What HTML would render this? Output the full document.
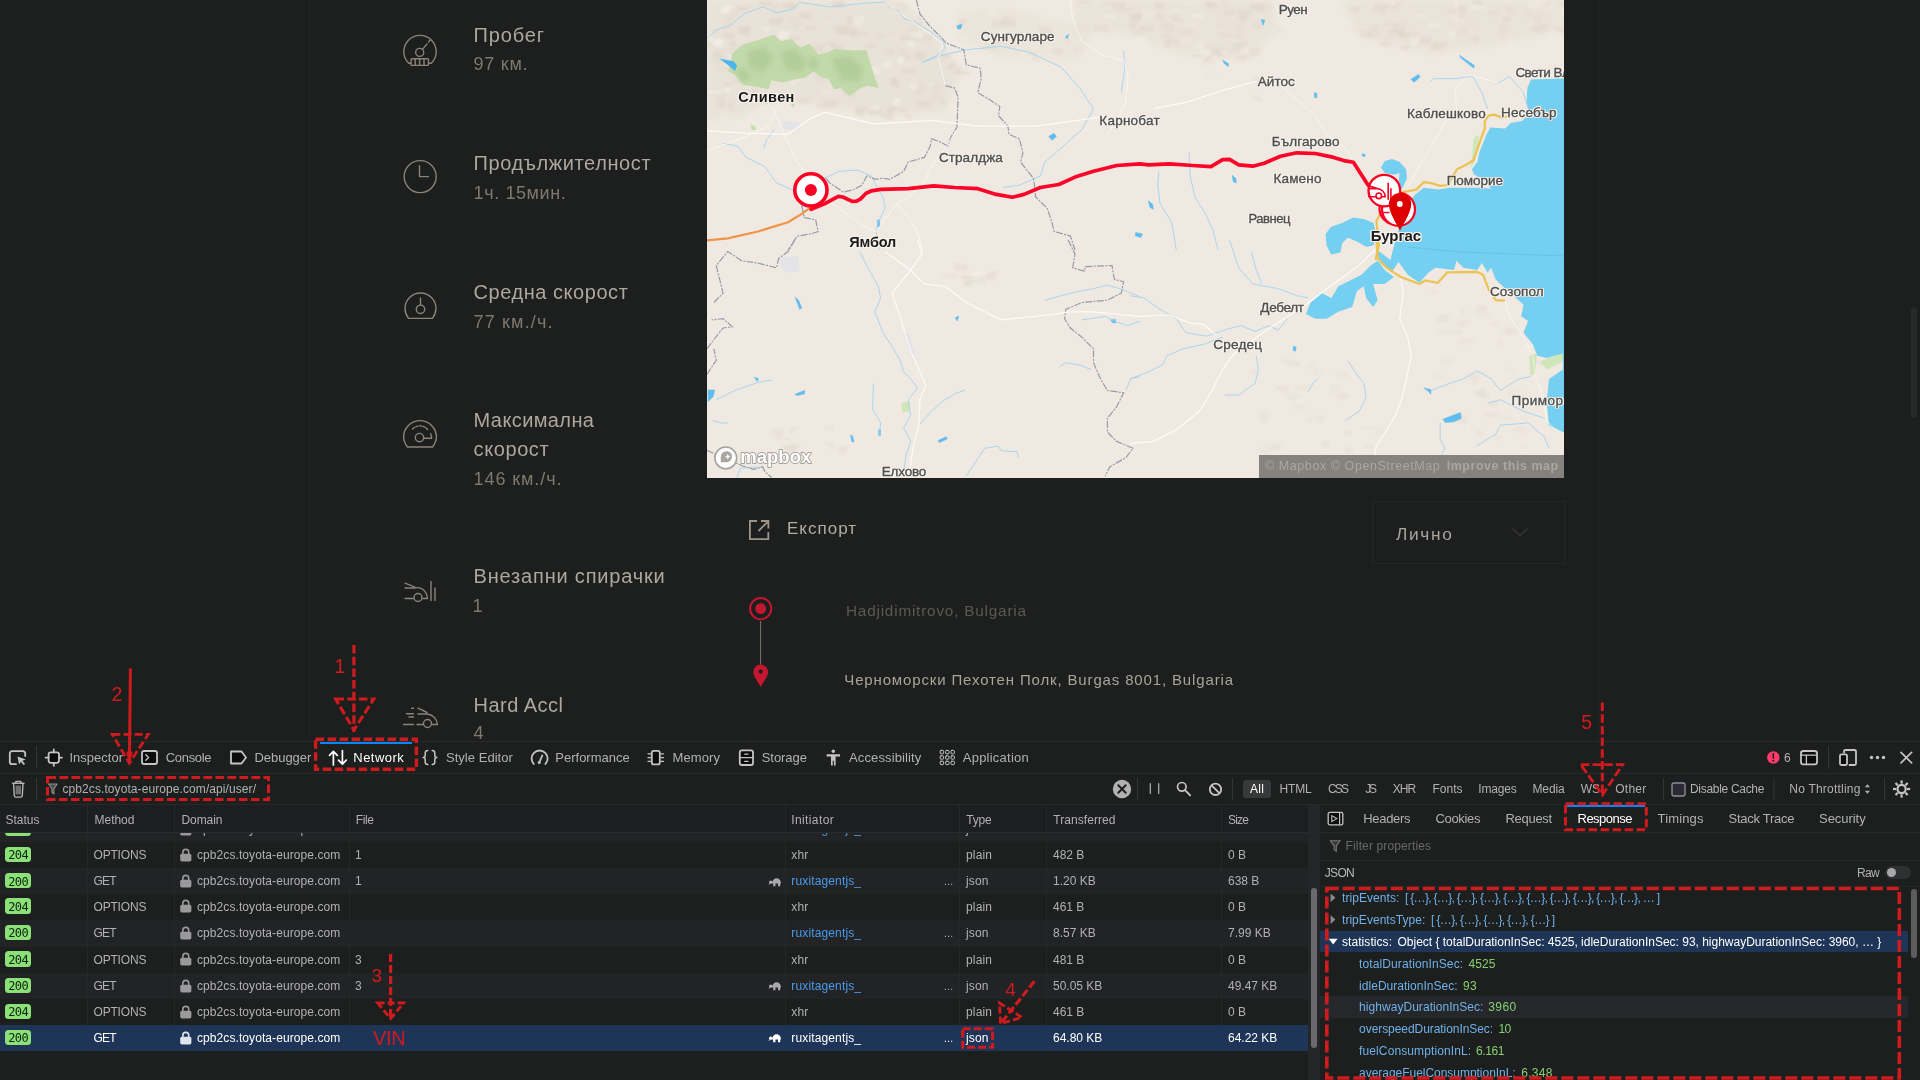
<!DOCTYPE html>
<html lang="bg"><head><meta charset="utf-8"><title>MyT trip</title>
<style>
html,body{margin:0;padding:0;background:#1d1f1e;overflow:hidden}
body{width:1920px;height:1080px;position:relative;font-family:"Liberation Sans",sans-serif}
.b{position:absolute;display:block}
.t{position:absolute;white-space:pre;line-height:1;display:block}
</style></head><body><div class="b" style="left:0;top:0;width:1920px;height:1080px;will-change:transform;overflow:hidden">
<svg class="b" style="left:707px;top:0" width="857" height="478" viewBox="707 0 857 478" font-family='&quot;Liberation Sans&quot;, sans-serif'><defs><filter id="bl" x="-20%" y="-20%" width="140%" height="140%"><feGaussianBlur stdDeviation="2.500"/></filter><filter id="bl2" x="707" y="0" width="857" height="478" filterUnits="userSpaceOnUse"><feGaussianBlur stdDeviation=".9"/></filter><clipPath id="mc"><rect x="707" y="0" width="857" height="478"/></clipPath></defs><g clip-path="url(#mc)"><rect x="707" y="0" width="857" height="478" fill="#efe9e1"/><path d="M707.0 0.0 L900.0 0.0 L930.0 30.0 L962.0 70.0 L945.0 112.0 L880.0 116.0 L820.0 106.0 L770.0 100.0 L740.0 118.0 L707.0 120.0Z" fill="#e3dbcd" opacity="0.44" filter="url(#bl)"/><path d="M955.0 10.0 L1010.0 8.0 L1095.0 30.0 L1080.0 60.0 L1000.0 58.0 L960.0 40.0Z" fill="#e3dbcd" opacity="0.28" filter="url(#bl)"/><path d="M1075.0 0.0 L1270.0 0.0 L1280.0 30.0 L1245.0 60.0 L1180.0 55.0 L1130.0 35.0 L1075.0 32.0Z" fill="#e3dbcd" opacity="0.36" filter="url(#bl)"/><path d="M1340.0 0.0 L1564.0 0.0 L1564.0 30.0 L1500.0 45.0 L1430.0 55.0 L1360.0 38.0Z" fill="#e3dbcd" opacity="0.36" filter="url(#bl)"/><g filter="url(#bl2)"><path d="M789.6 18.1 L801.7 18.2 L799.6 21.5 L789.7 20.8Z" fill="#d9d0c1" opacity="0.21"/><path d="M836.4 4.5 L846.2 3.5 L840.9 7.9 L834.8 7.2Z" fill="#d9d0c1" opacity="0.44"/><path d="M738.6 26.8 L750.5 27.0 L748.7 35.5 L738.9 33.7Z" fill="#d9d0c1" opacity="0.49"/><path d="M718.9 103.0 L727.1 102.1 L722.4 106.9 L717.3 106.1Z" fill="#d9d0c1" opacity="0.44"/><path d="M753.1 69.8 L765.1 69.9 L763.1 75.0 L753.3 74.0Z" fill="#d9d0c1" opacity="0.21"/><path d="M759.5 81.6 L769.2 81.9 L768.0 86.5 L759.9 85.6Z" fill="#d9d0c1" opacity="0.28"/><path d="M909.6 83.9 L917.3 83.9 L915.9 90.3 L909.7 89.0Z" fill="#f7f3ee" opacity="0.41"/><path d="M737.1 50.2 L750.4 50.1 L747.7 54.1 L737.1 53.3Z" fill="#d9d0c1" opacity="0.39"/><path d="M902.0 68.8 L916.6 69.2 L915.2 73.6 L902.7 72.7Z" fill="#d9d0c1" opacity="0.37"/><path d="M823.3 100.8 L838.7 101.2 L837.0 106.6 L824.0 105.5Z" fill="#d9d0c1" opacity="0.40"/><path d="M916.6 34.2 L925.8 33.0 L920.2 41.2 L914.7 39.8Z" fill="#d9d0c1" opacity="0.24"/><path d="M736.9 7.1 L750.3 6.5 L745.6 10.9 L735.8 10.1Z" fill="#d9d0c1" opacity="0.46"/><path d="M727.5 53.9 L738.6 54.7 L738.9 62.2 L728.8 60.5Z" fill="#f7f3ee" opacity="0.28"/><path d="M812.9 43.1 L827.6 42.2 L821.9 51.8 L811.5 50.0Z" fill="#d9d0c1" opacity="0.26"/><path d="M766.5 58.2 L778.0 57.0 L771.7 62.8 L764.5 61.9Z" fill="#d9d0c1" opacity="0.30"/><path d="M883.1 61.9 L894.9 60.8 L888.9 68.9 L881.3 67.5Z" fill="#f7f3ee" opacity="0.43"/><path d="M930.0 95.7 L939.3 94.8 L934.3 101.1 L928.4 100.1Z" fill="#d9d0c1" opacity="0.21"/><path d="M724.2 25.1 L731.0 24.0 L726.0 30.1 L722.4 29.1Z" fill="#d9d0c1" opacity="0.24"/><path d="M732.9 43.6 L738.2 43.9 L738.0 51.9 L733.3 50.2Z" fill="#d9d0c1" opacity="0.27"/><path d="M795.6 43.7 L801.9 44.9 L804.6 51.8 L797.6 50.2Z" fill="#d9d0c1" opacity="0.34"/><path d="M728.9 12.3 L737.7 13.1 L738.5 16.9 L730.2 15.9Z" fill="#d9d0c1" opacity="0.20"/><path d="M949.5 63.4 L956.1 62.3 L951.0 69.6 L947.6 68.4Z" fill="#d9d0c1" opacity="0.49"/><path d="M927.1 83.5 L935.0 82.7 L930.8 88.7 L925.8 87.7Z" fill="#f7f3ee" opacity="0.35"/><path d="M905.7 39.6 L913.1 40.7 L915.5 47.4 L907.6 45.9Z" fill="#f7f3ee" opacity="0.44"/><path d="M915.7 88.8 L923.2 88.4 L920.5 94.9 L915.1 93.7Z" fill="#d9d0c1" opacity="0.20"/><path d="M778.3 31.1 L790.9 31.0 L787.9 39.8 L778.0 38.1Z" fill="#f7f3ee" opacity="0.49"/><path d="M763.2 27.2 L770.4 27.5 L769.9 31.4 L763.7 30.6Z" fill="#f7f3ee" opacity="0.45"/><path d="M829.3 78.4 L843.1 78.7 L841.6 81.9 L829.9 81.2Z" fill="#f7f3ee" opacity="0.43"/><path d="M898.3 57.4 L905.2 57.0 L902.5 65.1 L897.6 63.6Z" fill="#f7f3ee" opacity="0.49"/><path d="M807.9 48.2 L823.4 47.4 L817.6 55.5 L806.6 54.0Z" fill="#d9d0c1" opacity="0.24"/><path d="M937.7 96.8 L944.3 97.9 L946.9 104.7 L939.7 103.1Z" fill="#d9d0c1" opacity="0.30"/><path d="M846.9 15.7 L852.1 16.1 L852.2 24.5 L847.5 22.8Z" fill="#d9d0c1" opacity="0.47"/><path d="M817.6 104.6 L831.7 104.0 L826.9 108.9 L816.6 108.0Z" fill="#d9d0c1" opacity="0.27"/><path d="M856.5 31.1 L866.2 32.1 L867.5 34.9 L858.2 34.2Z" fill="#d9d0c1" opacity="0.33"/><path d="M855.8 108.5 L865.4 108.5 L863.5 117.0 L855.8 115.3Z" fill="#d9d0c1" opacity="0.35"/><path d="M711.8 52.8 L718.8 53.5 L719.8 55.8 L713.0 55.2Z" fill="#d9d0c1" opacity="0.34"/><path d="M891.9 66.8 L900.5 66.9 L899.2 72.9 L892.1 71.7Z" fill="#f7f3ee" opacity="0.22"/><path d="M849.9 29.8 L857.9 29.8 L856.4 37.5 L849.9 35.9Z" fill="#d9d0c1" opacity="0.42"/><path d="M939.7 53.2 L951.4 53.2 L949.2 59.2 L939.7 58.0Z" fill="#d9d0c1" opacity="0.33"/><path d="M843.0 57.4 L858.3 58.3 L858.3 64.6 L844.5 63.1Z" fill="#f7f3ee" opacity="0.27"/><path d="M738.0 53.1 L743.8 52.0 L739.2 57.5 L736.3 56.6Z" fill="#d9d0c1" opacity="0.43"/><path d="M889.6 79.2 L896.2 80.4 L898.6 87.5 L891.5 85.9Z" fill="#d9d0c1" opacity="0.48"/><path d="M808.6 58.5 L824.4 57.7 L818.6 66.5 L807.2 64.9Z" fill="#d9d0c1" opacity="0.35"/><path d="M793.5 23.5 L802.0 22.3 L796.4 30.8 L791.6 29.4Z" fill="#d9d0c1" opacity="0.33"/><path d="M711.6 39.8 L723.5 38.7 L717.6 45.9 L709.9 44.6Z" fill="#f7f3ee" opacity="0.43"/><path d="M774.7 4.8 L788.3 3.9 L782.6 9.4 L773.2 8.4Z" fill="#d9d0c1" opacity="0.47"/><path d="M915.8 31.0 L922.5 31.2 L921.7 39.5 L916.1 37.8Z" fill="#f7f3ee" opacity="0.22"/><path d="M721.7 82.6 L731.3 83.6 L732.9 86.0 L723.4 85.3Z" fill="#d9d0c1" opacity="0.43"/><path d="M728.4 102.7 L734.1 102.6 L732.6 110.9 L728.2 109.3Z" fill="#d9d0c1" opacity="0.36"/><path d="M740.0 63.2 L747.6 62.4 L743.3 66.9 L738.6 66.2Z" fill="#d9d0c1" opacity="0.25"/><path d="M786.6 36.6 L799.9 36.6 L797.2 41.3 L786.6 40.4Z" fill="#d9d0c1" opacity="0.30"/><path d="M711.6 30.1 L716.8 30.2 L716.2 37.5 L711.8 36.0Z" fill="#d9d0c1" opacity="0.34"/><path d="M915.8 51.9 L926.3 51.6 L923.3 59.9 L915.4 58.3Z" fill="#d9d0c1" opacity="0.40"/><path d="M919.2 84.8 L931.2 84.4 L927.6 90.2 L918.6 89.1Z" fill="#d9d0c1" opacity="0.23"/><path d="M725.0 88.9 L732.8 87.9 L728.0 92.9 L723.4 92.1Z" fill="#f7f3ee" opacity="0.46"/><path d="M878.0 33.8 L885.7 33.7 L883.8 38.6 L877.8 37.6Z" fill="#d9d0c1" opacity="0.33"/><path d="M955.0 65.6 L962.7 65.2 L959.6 74.4 L954.3 72.7Z" fill="#d9d0c1" opacity="0.19"/><path d="M804.3 57.0 L814.8 57.0 L812.8 61.2 L804.3 60.3Z" fill="#d9d0c1" opacity="0.27"/><path d="M729.9 47.9 L735.3 47.5 L732.7 51.1 L729.1 50.4Z" fill="#d9d0c1" opacity="0.37"/><path d="M841.9 90.1 L854.2 91.0 L854.8 97.4 L843.5 95.9Z" fill="#d9d0c1" opacity="0.29"/><path d="M891.7 77.2 L897.1 78.1 L899.2 85.2 L893.2 83.6Z" fill="#d9d0c1" opacity="0.41"/><path d="M914.1 16.7 L924.9 17.5 L925.4 22.7 L915.5 21.5Z" fill="#f7f3ee" opacity="0.44"/><path d="M855.9 107.1 L868.4 106.5 L863.8 114.3 L854.9 112.9Z" fill="#d9d0c1" opacity="0.23"/><path d="M799.0 12.6 L813.2 12.9 L811.4 18.9 L799.5 17.7Z" fill="#d9d0c1" opacity="0.40"/><path d="M831.8 0.4 L845.5 0.4 L842.8 7.9 L831.8 6.4Z" fill="#d9d0c1" opacity="0.39"/><path d="M723.8 88.4 L731.6 87.9 L728.2 91.9 L722.9 91.2Z" fill="#f7f3ee" opacity="0.25"/><path d="M833.0 45.9 L843.2 46.5 L843.3 53.0 L834.0 51.6Z" fill="#d9d0c1" opacity="0.39"/><path d="M726.8 17.7 L734.5 17.2 L731.4 25.2 L726.0 23.7Z" fill="#d9d0c1" opacity="0.20"/><path d="M722.5 32.3 L734.9 32.7 L733.8 39.4 L723.2 38.0Z" fill="#d9d0c1" opacity="0.35"/><path d="M825.5 56.0 L831.8 55.2 L828.1 64.3 L824.3 62.7Z" fill="#f7f3ee" opacity="0.48"/><path d="M711.5 55.1 L725.5 55.0 L722.3 63.9 L711.3 62.1Z" fill="#d9d0c1" opacity="0.26"/><path d="M855.3 17.0 L866.0 16.1 L860.9 25.7 L853.8 24.0Z" fill="#f7f3ee" opacity="0.35"/><path d="M933.1 84.4 L940.7 84.4 L939.1 92.8 L933.1 91.1Z" fill="#d9d0c1" opacity="0.19"/><path d="M832.4 54.1 L840.7 53.7 L837.8 57.9 L831.8 57.2Z" fill="#d9d0c1" opacity="0.45"/><path d="M707.4 90.1 L721.7 91.1 L722.2 93.8 L709.1 93.1Z" fill="#f7f3ee" opacity="0.47"/><path d="M780.9 44.7 L790.2 44.9 L789.1 53.7 L781.3 51.9Z" fill="#d9d0c1" opacity="0.32"/><path d="M777.2 5.8 L783.3 5.3 L780.3 13.8 L776.3 12.2Z" fill="#f7f3ee" opacity="0.27"/><path d="M774.8 61.3 L781.8 62.4 L784.1 66.6 L776.6 65.5Z" fill="#f7f3ee" opacity="0.44"/><path d="M867.9 109.6 L883.2 110.1 L881.9 115.9 L868.8 114.6Z" fill="#d9d0c1" opacity="0.41"/><path d="M822.0 90.3 L834.1 89.2 L828.0 95.0 L820.2 94.1Z" fill="#f7f3ee" opacity="0.23"/><path d="M827.4 41.2 L835.7 42.4 L837.8 48.7 L829.3 47.2Z" fill="#d9d0c1" opacity="0.39"/><path d="M783.7 66.9 L793.1 66.1 L788.5 70.9 L782.4 70.1Z" fill="#d9d0c1" opacity="0.47"/><path d="M833.8 26.4 L848.7 26.3 L845.3 35.4 L833.6 33.6Z" fill="#d9d0c1" opacity="0.25"/><path d="M730.1 41.0 L736.1 40.5 L733.0 45.5 L729.2 44.6Z" fill="#d9d0c1" opacity="0.46"/><path d="M898.2 49.5 L907.7 49.2 L904.8 55.7 L897.7 54.4Z" fill="#d9d0c1" opacity="0.21"/><path d="M739.1 60.4 L751.0 59.7 L746.4 68.6 L738.0 66.9Z" fill="#d9d0c1" opacity="0.27"/><path d="M808.9 53.5 L824.4 54.4 L824.3 61.6 L810.4 60.0Z" fill="#d9d0c1" opacity="0.20"/><path d="M887.9 107.5 L898.1 106.3 L892.1 114.0 L885.9 112.7Z" fill="#d9d0c1" opacity="0.47"/><path d="M917.5 102.7 L933.2 101.7 L927.0 107.1 L916.0 106.2Z" fill="#d9d0c1" opacity="0.35"/><path d="M880.9 113.0 L893.9 113.6 L893.4 119.9 L882.0 118.5Z" fill="#d9d0c1" opacity="0.36"/><path d="M717.1 93.9 L724.6 94.2 L724.3 102.4 L717.7 100.7Z" fill="#d9d0c1" opacity="0.23"/><path d="M771.2 76.4 L783.9 75.3 L777.9 80.0 L769.5 79.3Z" fill="#d9d0c1" opacity="0.37"/><path d="M806.0 26.8 L817.6 26.4 L813.7 29.9 L805.2 29.3Z" fill="#d9d0c1" opacity="0.48"/><path d="M871.4 106.1 L881.6 105.4 L877.5 110.5 L870.4 109.6Z" fill="#f7f3ee" opacity="0.41"/><path d="M785.4 2.6 L795.9 2.4 L793.1 9.7 L785.1 8.3Z" fill="#d9d0c1" opacity="0.39"/><path d="M715.7 40.6 L725.3 39.8 L721.0 47.7 L714.5 46.2Z" fill="#f7f3ee" opacity="0.42"/><path d="M835.7 24.6 L851.4 25.4 L850.8 29.5 L837.0 28.5Z" fill="#d9d0c1" opacity="0.26"/><path d="M900.9 35.4 L916.4 34.6 L910.8 41.4 L899.7 40.2Z" fill="#d9d0c1" opacity="0.32"/><path d="M876.7 113.9 L883.3 113.2 L879.6 119.2 L875.5 118.1Z" fill="#f7f3ee" opacity="0.24"/><path d="M720.2 7.2 L729.5 8.1 L730.7 15.6 L721.8 13.9Z" fill="#f7f3ee" opacity="0.49"/><path d="M897.3 3.8 L909.6 3.5 L906.1 9.1 L896.8 8.0Z" fill="#d9d0c1" opacity="0.24"/><path d="M707.7 33.6 L716.6 32.7 L711.8 42.3 L706.2 40.6Z" fill="#f7f3ee" opacity="0.26"/><path d="M797.9 98.6 L812.0 97.5 L805.6 104.2 L796.1 103.1Z" fill="#d9d0c1" opacity="0.31"/><path d="M714.7 49.3 L728.7 48.2 L722.2 56.9 L712.9 55.4Z" fill="#d9d0c1" opacity="0.21"/><path d="M897.6 107.8 L906.3 108.9 L908.2 112.5 L899.4 111.5Z" fill="#d9d0c1" opacity="0.27"/><path d="M889.7 38.0 L897.8 38.6 L898.2 41.0 L890.8 40.4Z" fill="#f7f3ee" opacity="0.38"/><path d="M766.6 57.0 L782.2 56.8 L778.1 65.7 L766.2 64.0Z" fill="#d9d0c1" opacity="0.32"/><path d="M753.6 96.3 L766.8 97.0 L766.3 104.2 L754.7 102.7Z" fill="#d9d0c1" opacity="0.29"/><path d="M788.5 43.4 L802.1 42.7 L796.9 46.9 L787.3 46.2Z" fill="#f7f3ee" opacity="0.27"/><path d="M723.5 4.1 L734.6 5.2 L736.2 9.0 L725.4 8.0Z" fill="#f7f3ee" opacity="0.49"/><path d="M774.5 10.1 L780.6 10.6 L781.1 16.1 L775.4 14.9Z" fill="#d9d0c1" opacity="0.26"/><path d="M813.3 74.4 L825.7 75.3 L826.0 81.9 L814.7 80.4Z" fill="#d9d0c1" opacity="0.23"/><path d="M921.4 35.3 L932.7 35.8 L932.3 40.5 L922.4 39.4Z" fill="#d9d0c1" opacity="0.27"/><path d="M769.6 18.4 L784.3 18.0 L780.0 24.9 L768.9 23.6Z" fill="#d9d0c1" opacity="0.49"/><path d="M836.4 27.8 L850.3 28.9 L851.4 34.7 L838.3 33.3Z" fill="#d9d0c1" opacity="0.34"/><path d="M915.9 100.9 L930.9 100.4 L926.3 104.1 L915.0 103.5Z" fill="#d9d0c1" opacity="0.25"/><path d="M955.1 70.0 L970.3 70.9 L970.2 75.2 L956.6 74.2Z" fill="#d9d0c1" opacity="0.27"/><path d="M905.3 113.5 L911.5 113.8 L911.2 120.1 L905.8 118.7Z" fill="#d9d0c1" opacity="0.30"/><path d="M743.0 24.5 L750.9 24.8 L750.5 31.1 L743.7 29.8Z" fill="#d9d0c1" opacity="0.20"/><path d="M790.4 81.4 L797.5 80.7 L793.7 86.3 L789.3 85.3Z" fill="#f7f3ee" opacity="0.36"/><path d="M723.1 12.2 L732.5 12.5 L731.7 18.5 L723.7 17.2Z" fill="#d9d0c1" opacity="0.24"/><path d="M884.3 49.2 L892.4 50.3 L894.4 54.0 L886.1 53.1Z" fill="#d9d0c1" opacity="0.36"/><path d="M798.1 50.0 L812.6 49.6 L808.6 59.0 L797.5 57.2Z" fill="#d9d0c1" opacity="0.41"/><path d="M758.9 0.7 L773.9 1.5 L773.4 6.2 L760.2 5.1Z" fill="#d9d0c1" opacity="0.46"/><path d="M824.5 19.5 L829.7 19.8 L829.8 25.8 L825.1 24.6Z" fill="#f7f3ee" opacity="0.22"/><path d="M865.7 44.5 L876.2 44.0 L872.4 48.4 L864.8 47.6Z" fill="#d9d0c1" opacity="0.47"/><path d="M734.7 58.9 L748.6 58.1 L743.4 67.7 L733.5 65.9Z" fill="#d9d0c1" opacity="0.48"/><path d="M720.6 111.1 L729.9 111.4 L729.0 119.6 L721.1 117.9Z" fill="#f7f3ee" opacity="0.24"/><path d="M907.4 26.6 L916.8 27.4 L917.6 34.7 L908.7 33.1Z" fill="#d9d0c1" opacity="0.26"/><path d="M808.9 62.1 L818.2 61.5 L814.3 65.9 L807.9 65.1Z" fill="#f7f3ee" opacity="0.46"/><path d="M717.5 67.5 L730.8 68.3 L730.9 70.7 L718.8 70.1Z" fill="#d9d0c1" opacity="0.37"/><path d="M847.3 75.2 L855.6 75.4 L854.6 80.8 L847.6 79.7Z" fill="#d9d0c1" opacity="0.39"/><path d="M820.9 52.6 L826.2 52.6 L825.1 59.3 L820.9 58.0Z" fill="#d9d0c1" opacity="0.42"/><path d="M905.9 55.0 L912.9 54.1 L908.3 60.8 L904.3 59.7Z" fill="#d9d0c1" opacity="0.32"/><path d="M730.4 53.0 L741.0 53.4 L740.0 56.3 L730.9 55.6Z" fill="#d9d0c1" opacity="0.41"/><path d="M905.3 61.4 L910.9 61.1 L908.8 67.4 L904.8 66.2Z" fill="#f7f3ee" opacity="0.23"/><path d="M893.7 97.8 L900.8 97.8 L899.3 106.7 L893.6 104.9Z" fill="#f7f3ee" opacity="0.47"/><path d="M749.1 94.6 L764.3 94.2 L760.1 98.0 L748.5 97.3Z" fill="#f7f3ee" opacity="0.24"/><path d="M915.0 17.2 L925.5 16.5 L921.1 25.7 L913.8 24.0Z" fill="#d9d0c1" opacity="0.35"/><path d="M788.4 4.4 L795.4 5.5 L797.5 8.4 L790.1 7.6Z" fill="#d9d0c1" opacity="0.46"/><path d="M750.0 94.2 L756.3 94.5 L756.1 100.4 L750.6 99.1Z" fill="#d9d0c1" opacity="0.46"/><path d="M848.6 69.6 L863.3 70.8 L864.3 73.2 L850.5 72.5Z" fill="#d9d0c1" opacity="0.31"/><path d="M910.4 31.8 L926.3 31.4 L922.0 38.2 L909.8 36.9Z" fill="#f7f3ee" opacity="0.33"/><path d="M752.1 89.2 L757.6 88.6 L754.5 97.2 L751.1 95.6Z" fill="#d9d0c1" opacity="0.49"/><path d="M856.4 79.6 L864.8 78.5 L859.4 82.7 L854.5 82.1Z" fill="#d9d0c1" opacity="0.38"/><path d="M817.2 61.5 L832.1 60.9 L826.9 65.3 L816.1 64.6Z" fill="#d9d0c1" opacity="0.20"/><path d="M707.7 42.6 L713.8 41.9 L710.4 47.7 L706.6 46.7Z" fill="#d9d0c1" opacity="0.37"/><path d="M759.1 74.9 L769.3 75.9 L770.7 78.7 L760.8 77.9Z" fill="#d9d0c1" opacity="0.24"/><path d="M731.4 76.6 L746.0 76.3 L742.3 84.3 L731.0 82.7Z" fill="#d9d0c1" opacity="0.20"/><path d="M871.5 67.5 L880.3 67.3 L878.1 74.4 L871.2 73.0Z" fill="#f7f3ee" opacity="0.41"/><path d="M961.2 35.6 L970.6 34.6 L965.2 40.1 L959.4 39.2Z" fill="#f7f3ee" opacity="0.12"/><path d="M1032.1 56.9 L1038.7 57.2 L1038.2 61.1 L1032.6 60.3Z" fill="#d9d0c1" opacity="0.25"/><path d="M998.3 23.6 L1003.8 24.3 L1005.0 31.9 L999.4 30.3Z" fill="#f7f3ee" opacity="0.12"/><path d="M1073.2 46.7 L1083.3 46.6 L1080.9 54.2 L1073.0 52.7Z" fill="#d9d0c1" opacity="0.14"/><path d="M987.5 10.0 L996.2 10.5 L996.0 17.5 L988.3 16.0Z" fill="#f7f3ee" opacity="0.26"/><path d="M992.2 36.8 L1002.0 36.9 L1000.3 44.5 L992.3 43.0Z" fill="#d9d0c1" opacity="0.25"/><path d="M991.5 20.3 L1004.6 20.9 L1004.0 28.9 L992.4 27.2Z" fill="#d9d0c1" opacity="0.29"/><path d="M1001.0 20.4 L1016.0 20.9 L1014.5 27.2 L1001.8 25.9Z" fill="#d9d0c1" opacity="0.31"/><path d="M1020.7 51.7 L1033.4 51.5 L1030.4 59.8 L1020.5 58.2Z" fill="#f7f3ee" opacity="0.23"/><path d="M998.1 19.0 L1009.9 20.0 L1010.9 22.5 L999.7 21.8Z" fill="#d9d0c1" opacity="0.13"/><path d="M1003.3 15.4 L1008.6 15.8 L1009.1 18.6 L1004.1 18.0Z" fill="#d9d0c1" opacity="0.26"/><path d="M1037.7 26.9 L1051.7 27.8 L1052.0 34.8 L1039.2 33.2Z" fill="#d9d0c1" opacity="0.29"/><path d="M970.0 18.7 L976.2 19.5 L977.8 21.9 L971.4 21.3Z" fill="#f7f3ee" opacity="0.24"/><path d="M1070.5 40.8 L1078.7 39.9 L1073.8 44.4 L1068.9 43.7Z" fill="#f7f3ee" opacity="0.16"/><path d="M999.7 30.0 L1004.9 29.5 L1002.1 34.6 L998.8 33.7Z" fill="#f7f3ee" opacity="0.19"/><path d="M1025.5 52.3 L1037.3 52.1 L1034.3 55.5 L1025.2 54.8Z" fill="#d9d0c1" opacity="0.27"/><path d="M1003.5 44.6 L1014.5 45.5 L1015.2 48.9 L1005.0 48.1Z" fill="#d9d0c1" opacity="0.28"/><path d="M983.3 47.6 L999.0 47.6 L995.8 50.7 L983.2 50.1Z" fill="#d9d0c1" opacity="0.28"/><path d="M980.8 33.7 L989.7 33.1 L986.0 41.7 L979.9 40.1Z" fill="#f7f3ee" opacity="0.18"/><path d="M985.1 44.4 L995.5 44.7 L994.5 48.0 L985.6 47.3Z" fill="#d9d0c1" opacity="0.27"/><path d="M1052.6 48.9 L1064.5 48.7 L1061.3 54.1 L1052.2 53.0Z" fill="#d9d0c1" opacity="0.29"/><path d="M958.5 18.7 L966.4 18.7 L964.9 27.1 L958.5 25.4Z" fill="#d9d0c1" opacity="0.29"/><path d="M987.7 32.0 L998.5 32.6 L998.4 39.5 L988.7 38.0Z" fill="#d9d0c1" opacity="0.19"/><path d="M1000.7 16.1 L1015.0 16.7 L1014.1 23.0 L1001.7 21.7Z" fill="#d9d0c1" opacity="0.21"/><path d="M1063.3 38.1 L1069.7 39.0 L1071.5 43.9 L1064.8 42.7Z" fill="#d9d0c1" opacity="0.16"/><path d="M1248.0 9.3 L1254.7 8.9 L1251.9 13.8 L1247.3 12.9Z" fill="#d9d0c1" opacity="0.20"/><path d="M1142.3 11.4 L1158.0 10.4 L1151.7 18.7 L1140.7 17.3Z" fill="#f7f3ee" opacity="0.18"/><path d="M1238.0 44.0 L1247.7 44.3 L1246.9 48.2 L1238.5 47.3Z" fill="#d9d0c1" opacity="0.21"/><path d="M1154.6 2.0 L1164.0 2.5 L1163.7 9.8 L1155.4 8.2Z" fill="#d9d0c1" opacity="0.31"/><path d="M1170.0 8.5 L1181.6 9.1 L1181.2 13.9 L1170.9 12.9Z" fill="#f7f3ee" opacity="0.26"/><path d="M1192.7 44.9 L1202.3 45.5 L1202.1 49.3 L1193.6 48.4Z" fill="#f7f3ee" opacity="0.35"/><path d="M1218.5 51.1 L1231.0 51.0 L1228.1 58.0 L1218.3 56.6Z" fill="#d9d0c1" opacity="0.31"/><path d="M1095.1 25.2 L1108.7 25.5 L1107.0 32.5 L1095.6 31.0Z" fill="#d9d0c1" opacity="0.26"/><path d="M1168.3 37.3 L1177.8 38.3 L1179.4 44.3 L1170.0 42.9Z" fill="#d9d0c1" opacity="0.32"/><path d="M1234.5 23.3 L1244.9 22.2 L1239.1 32.2 L1232.7 30.4Z" fill="#d9d0c1" opacity="0.20"/><path d="M1235.3 56.4 L1246.0 56.6 L1244.4 60.0 L1235.6 59.3Z" fill="#d9d0c1" opacity="0.34"/><path d="M1180.0 38.4 L1194.1 38.1 L1190.6 44.5 L1179.6 43.3Z" fill="#f7f3ee" opacity="0.21"/><path d="M1215.3 23.5 L1228.7 24.7 L1229.9 27.3 L1217.2 26.5Z" fill="#d9d0c1" opacity="0.17"/><path d="M1131.2 24.0 L1136.4 23.8 L1134.7 29.5 L1130.9 28.4Z" fill="#d9d0c1" opacity="0.24"/><path d="M1129.4 13.5 L1142.5 13.5 L1140.1 22.1 L1129.5 20.4Z" fill="#d9d0c1" opacity="0.36"/><path d="M1155.4 12.7 L1161.8 13.5 L1163.0 20.4 L1156.6 18.8Z" fill="#d9d0c1" opacity="0.27"/><path d="M1190.2 13.6 L1205.8 13.9 L1203.8 18.7 L1190.8 17.7Z" fill="#f7f3ee" opacity="0.36"/><path d="M1171.0 17.7 L1182.0 18.5 L1182.5 21.4 L1172.3 20.7Z" fill="#d9d0c1" opacity="0.37"/><path d="M1129.8 22.6 L1137.6 21.8 L1133.5 28.1 L1128.6 27.0Z" fill="#d9d0c1" opacity="0.34"/><path d="M1132.6 14.7 L1141.0 14.5 L1138.7 20.6 L1132.4 19.4Z" fill="#d9d0c1" opacity="0.32"/><path d="M1250.2 3.4 L1264.3 4.1 L1263.7 11.9 L1251.3 10.2Z" fill="#d9d0c1" opacity="0.36"/><path d="M1204.8 0.9 L1209.9 1.3 L1210.1 9.6 L1205.4 7.9Z" fill="#d9d0c1" opacity="0.18"/><path d="M1104.3 14.0 L1117.8 13.2 L1112.3 19.1 L1102.9 18.1Z" fill="#f7f3ee" opacity="0.35"/><path d="M1199.7 46.9 L1212.1 47.6 L1211.9 55.2 L1200.9 53.6Z" fill="#f7f3ee" opacity="0.21"/><path d="M1217.0 31.8 L1230.2 32.8 L1230.6 37.5 L1218.6 36.4Z" fill="#d9d0c1" opacity="0.22"/><path d="M1123.0 8.4 L1133.4 8.3 L1131.1 11.7 L1122.9 11.0Z" fill="#d9d0c1" opacity="0.28"/><path d="M1177.1 32.4 L1191.6 33.2 L1191.4 35.4 L1178.5 34.8Z" fill="#d9d0c1" opacity="0.30"/><path d="M1211.4 50.4 L1220.5 51.5 L1222.4 55.9 L1213.2 54.8Z" fill="#d9d0c1" opacity="0.32"/><path d="M1205.4 1.7 L1217.1 2.7 L1218.2 8.8 L1207.1 7.4Z" fill="#d9d0c1" opacity="0.40"/><path d="M1179.7 29.1 L1194.6 29.6 L1193.3 32.3 L1180.6 31.6Z" fill="#d9d0c1" opacity="0.24"/><path d="M1251.6 22.0 L1261.9 22.6 L1262.0 28.1 L1252.7 26.9Z" fill="#d9d0c1" opacity="0.27"/><path d="M1161.6 33.2 L1175.7 34.0 L1175.5 38.0 L1162.9 37.0Z" fill="#d9d0c1" opacity="0.28"/><path d="M1130.7 30.4 L1146.4 31.1 L1145.6 37.3 L1131.9 35.9Z" fill="#d9d0c1" opacity="0.24"/><path d="M1136.3 35.2 L1148.3 34.1 L1142.2 42.9 L1134.5 41.4Z" fill="#f7f3ee" opacity="0.38"/><path d="M1186.8 3.0 L1195.1 2.2 L1191.0 6.0 L1185.6 5.4Z" fill="#f7f3ee" opacity="0.31"/><path d="M1209.9 47.3 L1224.9 47.6 L1222.8 54.0 L1210.4 52.7Z" fill="#d9d0c1" opacity="0.33"/><path d="M1197.2 40.9 L1204.6 40.8 L1202.8 47.9 L1197.1 46.5Z" fill="#f7f3ee" opacity="0.18"/><path d="M1112.2 2.2 L1125.7 2.6 L1124.2 10.7 L1112.8 9.0Z" fill="#d9d0c1" opacity="0.36"/><path d="M1236.2 33.7 L1244.1 33.5 L1241.9 38.5 L1235.9 37.6Z" fill="#d9d0c1" opacity="0.26"/><path d="M1206.6 56.0 L1212.2 54.9 L1207.4 62.4 L1204.7 61.2Z" fill="#d9d0c1" opacity="0.36"/><path d="M1192.9 55.1 L1202.9 54.8 L1200.0 58.2 L1192.5 57.6Z" fill="#d9d0c1" opacity="0.39"/><path d="M1276.1 28.5 L1285.6 28.9 L1284.8 32.1 L1276.6 31.4Z" fill="#d9d0c1" opacity="0.20"/><path d="M1078.2 0.3 L1090.7 1.4 L1091.9 4.0 L1080.0 3.3Z" fill="#d9d0c1" opacity="0.37"/><path d="M1101.4 1.1 L1114.4 1.6 L1113.6 5.5 L1102.4 4.6Z" fill="#d9d0c1" opacity="0.17"/><path d="M1233.7 42.8 L1248.1 41.8 L1241.9 50.2 L1232.0 48.7Z" fill="#d9d0c1" opacity="0.33"/><path d="M1222.0 0.7 L1227.2 1.4 L1228.7 7.6 L1223.3 6.2Z" fill="#d9d0c1" opacity="0.23"/><path d="M1224.5 10.0 L1239.0 8.9 L1232.6 15.9 L1222.8 14.7Z" fill="#d9d0c1" opacity="0.30"/><path d="M1164.9 40.6 L1171.5 40.3 L1169.1 48.4 L1164.4 46.8Z" fill="#d9d0c1" opacity="0.31"/><path d="M1160.7 23.1 L1174.3 23.8 L1173.9 31.8 L1161.8 30.1Z" fill="#d9d0c1" opacity="0.23"/><path d="M1219.2 49.6 L1227.8 50.8 L1229.9 56.3 L1221.1 55.0Z" fill="#f7f3ee" opacity="0.31"/><path d="M1138.3 25.7 L1153.0 26.2 L1151.6 31.0 L1139.0 29.9Z" fill="#d9d0c1" opacity="0.38"/><path d="M1240.5 17.0 L1245.6 16.8 L1243.9 21.6 L1240.2 20.7Z" fill="#d9d0c1" opacity="0.36"/><path d="M1256.9 2.5 L1271.1 3.4 L1271.2 10.4 L1258.4 8.8Z" fill="#d9d0c1" opacity="0.23"/><path d="M1249.5 48.4 L1262.0 48.1 L1258.3 56.9 L1248.9 55.2Z" fill="#d9d0c1" opacity="0.29"/><path d="M1238.5 12.0 L1251.7 11.4 L1246.9 20.6 L1237.4 18.9Z" fill="#d9d0c1" opacity="0.33"/><path d="M1170.4 12.4 L1178.2 13.1 L1179.0 19.9 L1171.6 18.4Z" fill="#d9d0c1" opacity="0.18"/><path d="M1240.3 46.3 L1247.9 47.3 L1249.6 52.8 L1241.9 51.5Z" fill="#f7f3ee" opacity="0.29"/><path d="M1172.7 35.4 L1179.8 34.6 L1175.8 39.5 L1171.4 38.7Z" fill="#f7f3ee" opacity="0.25"/><path d="M1190.7 24.1 L1201.4 23.1 L1195.6 28.0 L1188.9 27.3Z" fill="#f7f3ee" opacity="0.25"/><path d="M1236.4 9.4 L1248.0 9.4 L1245.8 14.4 L1236.5 13.4Z" fill="#d9d0c1" opacity="0.17"/><path d="M1448.9 31.2 L1456.8 31.0 L1454.6 38.9 L1448.6 37.3Z" fill="#f7f3ee" opacity="0.35"/><path d="M1396.9 2.1 L1404.1 1.1 L1399.3 6.2 L1395.2 5.4Z" fill="#d9d0c1" opacity="0.30"/><path d="M1535.0 25.2 L1550.4 24.2 L1543.9 33.7 L1533.3 32.0Z" fill="#d9d0c1" opacity="0.26"/><path d="M1397.6 31.0 L1409.7 31.5 L1408.6 39.8 L1398.3 38.0Z" fill="#d9d0c1" opacity="0.27"/><path d="M1562.1 12.2 L1567.6 11.8 L1565.3 16.7 L1561.6 15.8Z" fill="#f7f3ee" opacity="0.38"/><path d="M1527.5 2.6 L1541.2 2.9 L1539.6 9.8 L1528.1 8.4Z" fill="#f7f3ee" opacity="0.17"/><path d="M1406.9 32.5 L1420.3 32.1 L1416.2 36.2 L1406.2 35.4Z" fill="#d9d0c1" opacity="0.19"/><path d="M1447.8 9.3 L1455.4 9.7 L1455.3 13.1 L1448.5 12.4Z" fill="#d9d0c1" opacity="0.34"/><path d="M1383.7 2.0 L1398.9 3.0 L1399.3 6.3 L1385.4 5.4Z" fill="#f7f3ee" opacity="0.38"/><path d="M1371.3 24.6 L1377.4 25.4 L1378.9 33.2 L1372.7 31.5Z" fill="#d9d0c1" opacity="0.27"/><path d="M1416.1 45.3 L1426.4 44.4 L1421.5 52.0 L1414.7 50.7Z" fill="#d9d0c1" opacity="0.17"/><path d="M1499.9 30.4 L1506.5 29.9 L1503.3 38.7 L1498.9 37.0Z" fill="#d9d0c1" opacity="0.20"/><path d="M1400.7 46.2 L1409.4 46.2 L1407.6 50.2 L1400.7 49.4Z" fill="#d9d0c1" opacity="0.38"/><path d="M1489.7 11.6 L1499.9 11.0 L1496.0 16.3 L1488.7 15.4Z" fill="#d9d0c1" opacity="0.25"/><path d="M1547.2 5.4 L1555.4 4.3 L1550.2 13.7 L1545.4 12.1Z" fill="#f7f3ee" opacity="0.23"/><path d="M1559.2 0.9 L1573.1 0.0 L1567.4 5.9 L1557.8 4.9Z" fill="#d9d0c1" opacity="0.36"/><path d="M1458.0 10.2 L1467.7 9.5 L1463.5 18.7 L1456.8 17.0Z" fill="#d9d0c1" opacity="0.19"/><path d="M1380.3 42.4 L1393.2 41.4 L1387.2 46.6 L1378.7 45.7Z" fill="#d9d0c1" opacity="0.31"/><path d="M1451.0 15.1 L1458.3 15.6 L1458.5 21.7 L1451.8 20.4Z" fill="#f7f3ee" opacity="0.30"/><path d="M1385.3 3.6 L1398.4 4.1 L1397.5 9.1 L1386.2 8.0Z" fill="#d9d0c1" opacity="0.36"/><path d="M1415.1 46.3 L1429.6 45.1 L1422.8 52.3 L1413.2 51.1Z" fill="#f7f3ee" opacity="0.28"/><path d="M1535.3 14.6 L1542.4 14.3 L1539.9 22.6 L1534.8 21.0Z" fill="#d9d0c1" opacity="0.25"/><path d="M1473.3 0.3 L1484.0 0.3 L1482.0 5.9 L1473.3 4.8Z" fill="#d9d0c1" opacity="0.33"/><path d="M1411.9 39.1 L1421.1 38.1 L1415.7 46.6 L1410.1 45.1Z" fill="#f7f3ee" opacity="0.39"/><path d="M1450.8 28.2 L1461.7 27.1 L1455.7 34.5 L1448.9 33.2Z" fill="#f7f3ee" opacity="0.21"/><path d="M1380.9 5.6 L1388.6 4.5 L1383.3 13.6 L1379.0 12.0Z" fill="#d9d0c1" opacity="0.33"/><path d="M1383.7 1.0 L1395.3 1.0 L1393.2 7.4 L1383.8 6.1Z" fill="#f7f3ee" opacity="0.18"/><path d="M1350.1 6.8 L1360.5 6.2 L1356.7 12.8 L1349.2 11.6Z" fill="#d9d0c1" opacity="0.26"/><path d="M1370.7 32.5 L1385.1 32.7 L1382.8 36.4 L1371.0 35.7Z" fill="#f7f3ee" opacity="0.20"/><path d="M1427.1 23.1 L1441.3 22.9 L1437.6 29.3 L1426.7 28.0Z" fill="#f7f3ee" opacity="0.35"/><path d="M1415.8 13.2 L1424.5 14.4 L1426.6 18.8 L1417.8 17.7Z" fill="#f7f3ee" opacity="0.38"/><path d="M1395.8 23.2 L1407.8 23.3 L1405.7 28.4 L1396.0 27.4Z" fill="#d9d0c1" opacity="0.26"/><path d="M1453.1 1.1 L1459.6 1.8 L1460.5 10.0 L1454.2 8.2Z" fill="#f7f3ee" opacity="0.31"/><path d="M1538.2 1.9 L1550.2 2.3 L1549.2 6.5 L1538.9 5.6Z" fill="#d9d0c1" opacity="0.29"/><path d="M1396.1 28.6 L1405.9 28.1 L1402.2 37.3 L1395.3 35.6Z" fill="#d9d0c1" opacity="0.32"/><path d="M1367.0 32.7 L1382.5 32.1 L1377.5 38.8 L1366.0 37.6Z" fill="#d9d0c1" opacity="0.29"/><path d="M1373.2 6.8 L1379.7 6.6 L1377.7 11.6 L1372.9 10.6Z" fill="#d9d0c1" opacity="0.22"/><path d="M1359.7 30.0 L1373.9 30.2 L1371.6 36.7 L1360.0 35.4Z" fill="#d9d0c1" opacity="0.21"/><path d="M1499.1 25.3 L1510.1 25.3 L1507.7 32.0 L1499.0 30.7Z" fill="#d9d0c1" opacity="0.22"/><path d="M1389.6 28.2 L1398.8 27.0 L1393.1 34.7 L1387.7 33.4Z" fill="#d9d0c1" opacity="0.37"/><path d="M1393.4 30.6 L1403.8 31.8 L1405.7 35.3 L1395.4 34.4Z" fill="#d9d0c1" opacity="0.35"/><path d="M1375.5 3.7 L1390.1 2.6 L1383.7 9.3 L1373.8 8.2Z" fill="#d9d0c1" opacity="0.27"/><path d="M1504.7 6.0 L1512.2 6.6 L1512.6 14.8 L1505.7 13.0Z" fill="#d9d0c1" opacity="0.24"/><path d="M1418.9 37.1 L1430.7 37.9 L1430.9 45.2 L1420.2 43.6Z" fill="#d9d0c1" opacity="0.34"/><path d="M1506.5 41.8 L1516.7 42.3 L1516.3 49.5 L1507.3 48.0Z" fill="#f7f3ee" opacity="0.19"/><path d="M1535.1 0.2 L1548.5 0.2 L1545.8 6.8 L1535.1 5.4Z" fill="#f7f3ee" opacity="0.30"/><path d="M1433.6 43.1 L1448.2 42.8 L1444.3 49.7 L1433.1 48.4Z" fill="#d9d0c1" opacity="0.27"/><path d="M1502.0 16.1 L1511.3 15.8 L1508.5 22.4 L1501.5 21.2Z" fill="#d9d0c1" opacity="0.35"/><path d="M1530.3 27.5 L1540.2 27.0 L1536.6 31.6 L1529.5 30.8Z" fill="#d9d0c1" opacity="0.30"/><path d="M1470.3 4.8 L1485.4 5.7 L1485.1 9.8 L1471.6 8.8Z" fill="#f7f3ee" opacity="0.39"/><path d="M1385.8 23.5 L1400.8 22.4 L1394.2 26.5 L1384.0 25.9Z" fill="#d9d0c1" opacity="0.28"/><path d="M1455.9 28.4 L1468.4 28.1 L1464.8 33.8 L1455.3 32.7Z" fill="#d9d0c1" opacity="0.24"/><path d="M1457.7 5.4 L1466.8 5.6 L1465.4 10.8 L1457.9 9.8Z" fill="#d9d0c1" opacity="0.38"/><path d="M1556.0 26.8 L1565.9 28.0 L1567.9 33.5 L1558.0 32.2Z" fill="#d9d0c1" opacity="0.29"/><path d="M1522.8 9.4 L1531.3 10.2 L1532.2 18.3 L1524.1 16.5Z" fill="#d9d0c1" opacity="0.18"/><path d="M1538.9 23.1 L1545.7 23.2 L1544.4 27.9 L1539.0 26.9Z" fill="#d9d0c1" opacity="0.20"/><path d="M1380.9 34.7 L1392.5 35.8 L1394.1 39.8 L1382.8 38.8Z" fill="#d9d0c1" opacity="0.17"/><path d="M1432.2 43.3 L1440.5 42.1 L1434.9 50.5 L1430.2 49.0Z" fill="#d9d0c1" opacity="0.37"/><path d="M1471.3 36.7 L1478.5 36.9 L1477.5 42.7 L1471.5 41.5Z" fill="#d9d0c1" opacity="0.32"/><path d="M1468.7 22.6 L1475.0 23.2 L1475.8 26.6 L1469.7 25.8Z" fill="#d9d0c1" opacity="0.18"/><path d="M1201.9 71.8 L1216.0 72.5 L1215.6 78.5 L1203.2 77.1Z" fill="#d9d0c1" opacity="0.09"/><path d="M1243.9 55.8 L1256.8 55.0 L1251.6 60.9 L1242.6 59.9Z" fill="#d9d0c1" opacity="0.10"/><path d="M1253.3 76.6 L1262.1 76.3 L1259.4 82.3 L1252.8 81.1Z" fill="#d9d0c1" opacity="0.21"/><path d="M1220.8 79.6 L1228.5 80.6 L1230.4 82.9 L1222.5 82.2Z" fill="#f7f3ee" opacity="0.13"/><path d="M1252.9 95.3 L1261.3 96.4 L1263.3 101.9 L1254.8 100.6Z" fill="#d9d0c1" opacity="0.22"/><path d="M1207.0 61.2 L1219.9 60.7 L1215.8 65.5 L1206.2 64.6Z" fill="#f7f3ee" opacity="0.15"/><path d="M1202.1 58.7 L1209.2 58.2 L1206.1 67.5 L1201.3 65.7Z" fill="#d9d0c1" opacity="0.10"/><path d="M1227.4 60.8 L1236.8 59.9 L1231.9 64.2 L1225.9 63.6Z" fill="#f7f3ee" opacity="0.14"/><path d="M1207.1 45.3 L1215.3 44.2 L1209.9 49.7 L1205.3 48.8Z" fill="#d9d0c1" opacity="0.13"/><path d="M1196.5 51.6 L1210.7 51.4 L1207.4 55.3 L1196.3 54.6Z" fill="#f7f3ee" opacity="0.20"/><path d="M1201.1 58.2 L1214.1 59.3 L1215.2 63.5 L1203.0 62.4Z" fill="#d9d0c1" opacity="0.22"/><path d="M1225.3 48.2 L1235.3 48.7 L1235.0 52.0 L1226.2 51.2Z" fill="#d9d0c1" opacity="0.21"/><path d="M1327.3 394.2 L1335.0 393.5 L1331.1 400.8 L1326.1 399.5Z" fill="#f7f3ee" opacity="0.13"/><path d="M1316.8 415.1 L1324.8 414.8 L1322.3 422.7 L1316.4 421.2Z" fill="#d9d0c1" opacity="0.20"/><path d="M1288.5 396.8 L1294.5 397.6 L1296.1 400.9 L1289.9 400.0Z" fill="#d9d0c1" opacity="0.21"/><path d="M1260.3 417.4 L1269.2 417.0 L1265.8 423.4 L1259.4 422.2Z" fill="#d9d0c1" opacity="0.16"/><path d="M1276.7 365.1 L1289.6 364.9 L1286.2 369.8 L1276.3 368.9Z" fill="#f7f3ee" opacity="0.23"/><path d="M1368.6 453.4 L1375.0 452.2 L1370.0 458.0 L1366.7 457.1Z" fill="#d9d0c1" opacity="0.21"/><path d="M1294.2 399.5 L1306.4 398.9 L1302.0 406.7 L1293.2 405.3Z" fill="#f7f3ee" opacity="0.16"/><path d="M1333.0 371.8 L1339.3 372.4 L1339.9 380.3 L1334.0 378.6Z" fill="#f7f3ee" opacity="0.11"/><path d="M1250.6 369.4 L1257.8 369.2 L1255.4 374.3 L1250.1 373.3Z" fill="#d9d0c1" opacity="0.16"/><path d="M1334.4 371.6 L1348.6 372.1 L1347.5 378.0 L1335.2 376.7Z" fill="#d9d0c1" opacity="0.18"/><path d="M1340.8 391.9 L1345.8 392.5 L1347.0 399.9 L1341.9 398.3Z" fill="#d9d0c1" opacity="0.11"/><path d="M1364.6 422.9 L1370.1 422.0 L1365.9 427.4 L1363.0 426.5Z" fill="#f7f3ee" opacity="0.14"/><path d="M1373.0 439.9 L1379.0 439.7 L1376.9 447.1 L1372.6 445.7Z" fill="#f7f3ee" opacity="0.24"/><path d="M1284.4 360.8 L1299.8 361.8 L1300.1 366.3 L1286.1 365.2Z" fill="#d9d0c1" opacity="0.23"/><path d="M1361.2 425.4 L1371.2 425.8 L1370.8 428.7 L1362.0 428.0Z" fill="#d9d0c1" opacity="0.19"/><path d="M1343.4 446.7 L1351.3 447.8 L1353.4 453.0 L1345.3 451.7Z" fill="#d9d0c1" opacity="0.19"/><path d="M1280.0 357.1 L1288.9 356.4 L1284.7 362.6 L1278.8 361.5Z" fill="#d9d0c1" opacity="0.13"/><path d="M1344.0 430.4 L1351.6 430.5 L1350.2 434.9 L1344.0 434.0Z" fill="#d9d0c1" opacity="0.26"/><path d="M1294.2 385.9 L1308.9 386.1 L1306.5 389.8 L1294.5 389.0Z" fill="#d9d0c1" opacity="0.24"/><path d="M1321.8 441.3 L1328.6 441.5 L1328.0 448.3 L1322.2 446.9Z" fill="#d9d0c1" opacity="0.23"/><path d="M1285.5 393.3 L1292.8 392.7 L1289.6 396.6 L1284.6 395.9Z" fill="#d9d0c1" opacity="0.22"/><path d="M1307.7 363.6 L1316.3 363.2 L1313.5 369.4 L1307.2 368.2Z" fill="#d9d0c1" opacity="0.12"/><path d="M1345.4 467.6 L1356.6 467.6 L1354.3 471.3 L1345.4 470.5Z" fill="#d9d0c1" opacity="0.14"/><path d="M1373.7 427.3 L1385.6 427.7 L1384.5 436.0 L1374.3 434.2Z" fill="#d9d0c1" opacity="0.15"/><path d="M1353.4 450.7 L1361.7 451.1 L1361.1 454.9 L1354.0 454.0Z" fill="#f7f3ee" opacity="0.26"/><path d="M1268.6 444.2 L1282.7 443.7 L1278.5 451.6 L1267.9 450.1Z" fill="#d9d0c1" opacity="0.24"/><path d="M1289.8 394.2 L1300.9 395.0 L1301.3 399.4 L1291.1 398.4Z" fill="#d9d0c1" opacity="0.11"/><path d="M1324.4 425.4 L1338.4 426.4 L1338.8 432.6 L1326.0 431.2Z" fill="#f7f3ee" opacity="0.19"/><path d="M1314.9 368.9 L1323.2 367.9 L1318.2 375.4 L1313.3 374.1Z" fill="#d9d0c1" opacity="0.13"/><path d="M1307.0 466.4 L1313.0 466.2 L1311.4 469.6 L1306.8 469.0Z" fill="#d9d0c1" opacity="0.22"/><path d="M1364.7 444.4 L1374.4 444.8 L1373.8 449.1 L1365.4 448.2Z" fill="#d9d0c1" opacity="0.17"/><path d="M1292.4 402.6 L1304.7 403.6 L1305.5 410.6 L1294.0 409.0Z" fill="#d9d0c1" opacity="0.15"/><path d="M1307.0 417.6 L1315.9 416.6 L1310.8 421.8 L1305.4 420.9Z" fill="#d9d0c1" opacity="0.18"/><path d="M1366.2 466.9 L1381.7 467.7 L1381.1 473.6 L1367.4 472.3Z" fill="#d9d0c1" opacity="0.22"/><path d="M1330.3 385.6 L1341.6 385.6 L1339.2 394.4 L1330.2 392.6Z" fill="#d9d0c1" opacity="0.15"/><path d="M1293.1 456.2 L1298.4 456.6 L1298.8 460.3 L1293.8 459.5Z" fill="#d9d0c1" opacity="0.12"/><path d="M1337.5 394.6 L1348.9 394.7 L1346.8 400.1 L1337.6 399.0Z" fill="#d9d0c1" opacity="0.17"/><path d="M1261.0 371.7 L1275.8 370.7 L1269.7 377.9 L1259.4 376.7Z" fill="#f7f3ee" opacity="0.15"/><path d="M1258.3 413.7 L1266.1 413.8 L1264.9 419.6 L1258.5 418.4Z" fill="#d9d0c1" opacity="0.20"/><path d="M1260.8 411.6 L1272.3 411.4 L1269.3 415.1 L1260.5 414.4Z" fill="#d9d0c1" opacity="0.18"/><path d="M1365.9 416.1 L1378.7 415.1 L1373.1 423.6 L1364.3 422.1Z" fill="#f7f3ee" opacity="0.22"/><path d="M1259.3 449.6 L1268.6 450.7 L1270.4 453.7 L1261.1 452.8Z" fill="#d9d0c1" opacity="0.23"/><path d="M1264.2 443.1 L1269.8 442.8 L1267.6 447.6 L1263.6 446.7Z" fill="#d9d0c1" opacity="0.20"/><path d="M1274.8 386.0 L1287.6 386.9 L1288.2 391.5 L1276.4 390.4Z" fill="#d9d0c1" opacity="0.25"/><path d="M1323.8 460.1 L1338.4 460.7 L1337.4 464.1 L1324.8 463.3Z" fill="#d9d0c1" opacity="0.23"/><path d="M1498.3 419.8 L1504.6 420.3 L1505.2 425.0 L1499.2 423.9Z" fill="#f7f3ee" opacity="0.22"/><path d="M1431.5 374.9 L1445.3 375.9 L1445.9 378.6 L1433.2 377.9Z" fill="#d9d0c1" opacity="0.15"/><path d="M1442.2 358.4 L1456.4 357.4 L1450.5 364.9 L1440.7 363.6Z" fill="#d9d0c1" opacity="0.12"/><path d="M1483.7 333.0 L1496.3 332.1 L1490.9 338.3 L1482.3 337.2Z" fill="#f7f3ee" opacity="0.19"/><path d="M1499.3 416.9 L1514.7 416.5 L1510.4 420.0 L1498.7 419.4Z" fill="#d9d0c1" opacity="0.19"/><path d="M1520.4 415.7 L1525.8 416.4 L1527.3 419.8 L1521.7 418.9Z" fill="#d9d0c1" opacity="0.17"/><path d="M1474.7 311.6 L1489.0 312.5 L1489.1 317.0 L1476.2 315.9Z" fill="#d9d0c1" opacity="0.12"/><path d="M1457.9 321.0 L1472.7 319.9 L1466.1 327.6 L1456.0 326.3Z" fill="#d9d0c1" opacity="0.16"/><path d="M1473.8 379.5 L1483.1 378.3 L1477.3 384.6 L1471.8 383.6Z" fill="#d9d0c1" opacity="0.16"/><path d="M1451.4 330.3 L1461.9 330.4 L1460.3 334.9 L1451.6 333.9Z" fill="#d9d0c1" opacity="0.26"/><path d="M1484.5 410.9 L1499.1 411.2 L1497.2 418.5 L1485.0 417.0Z" fill="#d9d0c1" opacity="0.16"/><path d="M1452.4 414.8 L1467.0 415.3 L1465.5 423.5 L1453.1 421.7Z" fill="#d9d0c1" opacity="0.23"/><path d="M1505.0 368.4 L1517.0 368.6 L1515.0 373.5 L1505.2 372.5Z" fill="#d9d0c1" opacity="0.11"/><path d="M1458.8 338.4 L1474.7 338.0 L1470.4 344.2 L1458.2 343.1Z" fill="#d9d0c1" opacity="0.14"/><path d="M1460.2 308.0 L1465.2 307.9 L1463.9 316.2 L1460.0 314.6Z" fill="#d9d0c1" opacity="0.20"/><path d="M1454.8 313.4 L1460.5 312.9 L1457.8 318.2 L1454.0 317.2Z" fill="#f7f3ee" opacity="0.20"/><path d="M1525.9 380.5 L1531.8 380.7 L1531.3 384.6 L1526.3 383.8Z" fill="#f7f3ee" opacity="0.16"/><path d="M1509.1 355.4 L1523.6 355.3 L1520.6 358.8 L1509.0 358.1Z" fill="#f7f3ee" opacity="0.15"/><path d="M1438.9 329.4 L1451.7 329.2 L1448.3 333.7 L1438.5 332.9Z" fill="#d9d0c1" opacity="0.20"/><path d="M1519.4 391.0 L1526.5 392.1 L1528.8 398.4 L1521.2 396.9Z" fill="#d9d0c1" opacity="0.12"/><path d="M1513.1 427.8 L1521.8 427.1 L1517.6 431.7 L1511.8 430.9Z" fill="#d9d0c1" opacity="0.25"/><path d="M1493.6 435.5 L1500.9 436.1 L1501.4 440.5 L1494.6 439.5Z" fill="#d9d0c1" opacity="0.17"/><path d="M1498.1 340.7 L1503.7 339.6 L1499.0 346.2 L1496.3 345.1Z" fill="#d9d0c1" opacity="0.16"/><path d="M1476.9 382.9 L1484.7 381.7 L1479.2 388.6 L1474.9 387.5Z" fill="#f7f3ee" opacity="0.20"/><path d="M1490.6 403.3 L1499.2 402.5 L1494.8 406.9 L1489.2 406.2Z" fill="#d9d0c1" opacity="0.23"/><path d="M1468.7 373.3 L1480.1 373.6 L1479.1 379.6 L1469.3 378.3Z" fill="#d9d0c1" opacity="0.16"/><path d="M1505.2 327.8 L1518.1 328.4 L1517.7 335.3 L1506.3 333.8Z" fill="#d9d0c1" opacity="0.23"/><path d="M1532.4 359.4 L1540.5 360.5 L1542.4 365.6 L1534.2 364.3Z" fill="#d9d0c1" opacity="0.11"/><path d="M1474.7 392.2 L1488.2 393.3 L1489.4 397.3 L1476.7 396.3Z" fill="#d9d0c1" opacity="0.23"/><path d="M1430.3 290.5 L1436.8 290.5 L1435.5 293.9 L1430.3 293.2Z" fill="#d9d0c1" opacity="0.14"/><path d="M1437.2 314.7 L1450.3 313.9 L1445.0 323.3 L1435.8 321.6Z" fill="#d9d0c1" opacity="0.23"/><path d="M1477.4 389.1 L1486.2 389.0 L1484.1 396.9 L1477.2 395.3Z" fill="#d9d0c1" opacity="0.25"/><path d="M1466.2 426.0 L1471.9 425.8 L1470.0 432.4 L1465.9 431.1Z" fill="#f7f3ee" opacity="0.26"/><path d="M1492.1 322.3 L1499.9 322.1 L1497.8 326.9 L1491.9 326.0Z" fill="#d9d0c1" opacity="0.14"/><path d="M1507.3 390.1 L1515.6 389.4 L1511.7 399.1 L1506.2 397.3Z" fill="#d9d0c1" opacity="0.13"/><path d="M1519.3 426.8 L1527.2 427.6 L1528.2 434.3 L1520.5 432.8Z" fill="#d9d0c1" opacity="0.16"/><path d="M1475.8 430.3 L1482.6 430.6 L1482.0 437.4 L1476.2 436.0Z" fill="#d9d0c1" opacity="0.20"/><path d="M1521.6 344.4 L1535.2 343.6 L1529.9 352.6 L1520.3 350.9Z" fill="#f7f3ee" opacity="0.27"/><path d="M1431.2 313.3 L1443.7 313.0 L1439.9 316.9 L1430.6 316.2Z" fill="#f7f3ee" opacity="0.22"/><path d="M1521.4 444.7 L1526.8 445.4 L1528.1 449.1 L1522.6 448.2Z" fill="#d9d0c1" opacity="0.11"/><path d="M1478.0 323.5 L1487.8 322.4 L1482.0 327.2 L1476.1 326.4Z" fill="#f7f3ee" opacity="0.16"/><path d="M1476.0 308.0 L1485.8 308.4 L1485.3 312.1 L1476.8 311.3Z" fill="#d9d0c1" opacity="0.23"/><path d="M1477.6 304.2 L1486.5 305.2 L1488.0 310.2 L1479.3 309.0Z" fill="#d9d0c1" opacity="0.14"/><path d="M1504.1 330.2 L1511.1 329.2 L1506.2 334.8 L1502.4 333.9Z" fill="#d9d0c1" opacity="0.19"/><path d="M1466.9 376.2 L1475.9 376.6 L1475.6 379.2 L1467.7 378.6Z" fill="#d9d0c1" opacity="0.19"/><path d="M971.0 275.5 L986.8 276.0 L985.4 283.7 L971.9 282.1Z" fill="#d9d0c1" opacity="0.21"/><path d="M964.4 281.4 L973.6 281.2 L971.1 286.7 L964.0 285.7Z" fill="#d9d0c1" opacity="0.36"/><path d="M943.3 273.8 L958.5 274.0 L956.3 278.3 L943.7 277.4Z" fill="#d9d0c1" opacity="0.19"/><path d="M953.1 263.4 L967.4 264.4 L967.8 271.1 L954.8 269.6Z" fill="#d9d0c1" opacity="0.29"/><path d="M959.5 274.6 L970.6 275.7 L972.1 279.5 L961.4 278.5Z" fill="#d9d0c1" opacity="0.30"/><path d="M986.5 271.7 L998.0 271.1 L993.6 280.7 L985.5 278.9Z" fill="#d9d0c1" opacity="0.30"/><path d="M962.3 276.0 L971.6 276.2 L970.7 282.1 L962.8 280.9Z" fill="#d9d0c1" opacity="0.21"/><path d="M975.1 272.4 L982.5 271.8 L979.2 279.1 L974.1 277.7Z" fill="#f7f3ee" opacity="0.24"/><path d="M979.8 272.0 L990.0 271.1 L985.1 276.3 L978.4 275.4Z" fill="#f7f3ee" opacity="0.26"/><path d="M969.7 272.1 L983.7 271.3 L978.3 276.5 L968.4 275.6Z" fill="#f7f3ee" opacity="0.24"/><path d="M786.0 445.7 L800.8 444.6 L794.2 453.9 L784.2 452.3Z" fill="#d9d0c1" opacity="0.32"/><path d="M790.4 428.1 L797.1 427.1 L792.6 432.6 L788.9 431.7Z" fill="#d9d0c1" opacity="0.32"/><path d="M783.0 436.3 L789.0 437.5 L791.8 441.7 L785.0 440.6Z" fill="#d9d0c1" opacity="0.24"/><path d="M782.0 445.0 L795.3 445.4 L794.1 448.9 L782.7 448.1Z" fill="#d9d0c1" opacity="0.25"/><path d="M775.9 434.3 L784.7 433.1 L779.1 439.6 L774.0 438.5Z" fill="#d9d0c1" opacity="0.27"/><path d="M771.4 429.5 L784.3 429.0 L780.4 434.1 L770.7 433.2Z" fill="#d9d0c1" opacity="0.32"/><path d="M817.3 444.1 L831.7 443.9 L828.2 448.3 L817.0 447.5Z" fill="#f7f3ee" opacity="0.24"/><path d="M824.3 426.3 L834.2 426.8 L833.9 431.5 L825.1 430.5Z" fill="#d9d0c1" opacity="0.20"/><path d="M831.2 449.3 L840.1 449.5 L838.9 454.6 L831.5 453.6Z" fill="#f7f3ee" opacity="0.16"/><path d="M839.3 446.4 L848.4 445.9 L845.2 453.4 L838.6 452.0Z" fill="#d9d0c1" opacity="0.27"/><path d="M824.5 440.8 L834.9 441.4 L834.9 449.2 L825.5 447.5Z" fill="#d9d0c1" opacity="0.24"/><path d="M826.6 438.9 L840.8 438.8 L837.7 444.4 L826.5 443.3Z" fill="#f7f3ee" opacity="0.21"/></g><path d="M728.2 71.3 L732.6 53.5 L742.7 44.6 L758.3 40.1 L773.9 34.6 L780.6 41.2 L791.7 39.0 L800.6 47.9 L809.5 43.5 L818.5 54.6 L827.4 52.4 L834.1 49.0 L849.7 50.2 L866.4 50.2 L870.8 64.6 L874.2 75.8 L878.6 88.1 L867.5 85.8 L860.8 88.1 L849.7 95.9 L840.7 88.1 L834.1 89.2 L828.5 79.1 L820.7 76.9 L814.0 71.3 L805.1 78.0 L796.2 79.1 L782.8 82.5 L771.6 80.2 L768.3 89.2 L758.3 86.9 L742.7 84.7 L736.0 75.8Z" fill="#c2d9aa"/><path d="M747.1 51.3 L765.0 46.8 L773.9 58.0 L762.7 73.6 L749.4 66.9Z" fill="#a9c690" opacity=".6" filter="url(#bl)"/><path d="M780.6 51.3 L796.2 49.0 L807.3 62.4 L800.6 73.6 L785.0 69.1Z" fill="#a9c690" opacity=".6" filter="url(#bl)"/><path d="M831.8 58.0 L849.7 55.7 L863.0 66.9 L858.6 82.5 L840.7 80.2Z" fill="#a9c690" opacity=".6" filter="url(#bl)"/><path d="M738.2 66.9 L751.6 73.6 L747.1 82.5 L738.2 78.0Z" fill="#a9c690" opacity=".6" filter="url(#bl)"/><path d="M809.5 55.7 L818.5 60.2 L816.2 71.3 L808.4 66.9Z" fill="#a9c690" opacity=".6" filter="url(#bl)"/><path d="M750.5 124.8 L754.9 125.9 L756.0 130.0 L751.6 130.0Z" fill="#c2e0a6"/><path d="M763.8 102.5 L767.2 101.4 L767.6 104.8Z" fill="#c2e0a6"/><path d="M790.6 104.8 L794.4 103.0 L793.9 108.1Z" fill="#c2e0a6"/><path d="M781.0 121.5 L798.4 121.5 L799.5 129.6 L783.3 129.6Z" fill="#e3e3e8"/><path d="M778.7 257.4 L798.4 256.2 L799.5 271.2 L784.5 272.4Z" fill="#e3e3e8"/><path d="M903.7 332.6 L908.3 332.6 L915.3 354.6 L910.6 355.7Z" fill="#e3e3e8"/><path d="M1529.3 355.7 L1536.9 353.4 L1535.6 373.1 L1530.5 375.4Z" fill="#cfe6b8"/><path d="M1539.7 361.5 L1562.9 353.0 L1563.3 361.5 L1546.7 369.6Z" fill="#cfe6b8"/><path d="M1473.7 137.8 L1479.3 135.0 L1478.3 147.0 L1473.7 163.7 L1470.9 167.4Z" fill="#cfe6b8"/><path d="M901.4 403.2 L909.5 400.9 L910.2 411.3 L902.5 412.5Z" fill="#cfe6b8"/><path d="M1566.3 78.5 L1531.1 79.4 L1527.4 87.8 L1526.5 102.6 L1529.3 113.7 L1521.9 121.1 L1510.7 123.0 L1505.2 128.5 L1490.4 127.6 L1486.7 134.1 L1483.0 143.3 L1479.3 152.6 L1477.4 161.9 L1471.9 169.3 L1473.7 173.9 L1481.1 178.5 L1487.6 184.1 L1491.3 188.7 L1483.0 187.8 L1449.6 187.8 L1438.5 189.6 L1423.7 187.8 L1414.4 195.2 L1410.7 200.7 L1407.0 213.7 L1399.6 226.7 L1394.1 245.2 L1390.4 260.0 L1376.5 249.3 L1380.0 263.1 L1391.6 272.4 L1398.5 262.0 L1407.8 274.7 L1419.4 282.8 L1428.6 272.4 L1435.6 267.8 L1454.1 270.1 L1456.4 260.8 L1463.3 267.8 L1477.2 270.1 L1481.9 263.1 L1487.6 272.4 L1491.1 267.8 L1495.7 279.4 L1500.4 284.0 L1523.5 304.8 L1521.2 316.4 L1528.1 321.0 L1523.5 332.6 L1532.8 344.2 L1537.4 355.7 L1546.7 358.1 L1562.9 353.4 L1562.9 369.6 L1549.0 378.9 L1546.7 402.0 L1549.0 425.2 L1562.9 432.1 L1569.8 432.1 L1569.8 54.8Z" fill="#75cff0"/><path d="M1325.6 234.1 L1331.1 226.7 L1342.2 223.0 L1353.3 217.4 L1364.4 219.3 L1373.7 223.0 L1375.6 232.2 L1373.7 245.2 L1366.3 247.0 L1357.0 241.5 L1347.8 237.8 L1342.2 243.3 L1340.4 252.6 L1331.1 254.4 L1326.5 245.2Z" fill="#75cff0"/><path d="M1381.1 167.4 L1384.8 160.9 L1392.2 159.1 L1399.6 161.9 L1406.1 169.3 L1407.0 178.5 L1401.5 189.6 L1398.7 180.4 L1399.6 173.0 L1394.1 174.8 L1384.8 173.0Z" fill="#75cff0"/><path d="M1305.9 314.1 L1310.6 302.5 L1322.1 293.2 L1331.4 297.9 L1338.3 286.3 L1352.2 279.4 L1361.5 274.7 L1370.7 265.5 L1377.7 260.8 L1384.6 270.1 L1393.9 277.0 L1384.6 284.0 L1373.1 284.0 L1377.7 300.2 L1373.1 307.1 L1366.1 297.9 L1363.8 286.3 L1356.9 290.9 L1352.2 307.1 L1338.3 311.8 L1326.8 318.7 L1315.2 318.7Z" fill="#75cff0"/><path d="M719.3 58.4 L728.2 60.2 L733.7 61.3 L737.1 65.8 L734.9 70.9 L730.4 66.9 L725.9 63.5Z" fill="#4db4ea"/><path d="M956.8 25.9 L961.8 24.2 L961.0 28.4 L958.0 29.2Z" fill="#5ebcee" stroke="#5ebcee" stroke-width=".6" stroke-linejoin="round"/><path d="M1065.3 36.9 L1068.6 34.4 L1067.5 38.6Z" fill="#5ebcee" stroke="#5ebcee" stroke-width=".6" stroke-linejoin="round"/><path d="M1048.8 136.6 L1053.8 133.3 L1056.3 136.6 L1052.1 140.3Z" fill="#5ebcee" stroke="#5ebcee" stroke-width=".6" stroke-linejoin="round"/><path d="M877.5 220.0 L879.7 220.0 L879.3 226.7 L877.7 226.7Z" fill="#5ebcee" stroke="#5ebcee" stroke-width=".6" stroke-linejoin="round"/><path d="M1261.4 19.4 L1264.8 20.2 L1263.1 25.2Z" fill="#5ebcee" stroke="#5ebcee" stroke-width=".6" stroke-linejoin="round"/><path d="M1222.7 60.3 L1228.5 63.6 L1228.2 66.4 L1224.4 63.6Z" fill="#5ebcee" stroke="#5ebcee" stroke-width=".6" stroke-linejoin="round"/><path d="M1314.5 92.5 L1317.0 93.4 L1316.6 98.0 L1314.5 97.5Z" fill="#5ebcee" stroke="#5ebcee" stroke-width=".6" stroke-linejoin="round"/><path d="M1459.4 55.3 L1474.4 65.6 L1473.6 68.1 L1461.1 58.1Z" fill="#5ebcee" stroke="#5ebcee" stroke-width=".6" stroke-linejoin="round"/><path d="M1410.9 79.4 L1418.4 74.4 L1420.0 76.9 L1414.2 82.2Z" fill="#5ebcee" stroke="#5ebcee" stroke-width=".6" stroke-linejoin="round"/><path d="M1362.1 153.5 L1365.4 154.8 L1364.6 156.8 L1362.4 156.0Z" fill="#5ebcee" stroke="#5ebcee" stroke-width=".6" stroke-linejoin="round"/><path d="M1232.2 175.3 L1235.9 178.6 L1236.2 182.8 L1233.4 182.0Z" fill="#5ebcee" stroke="#5ebcee" stroke-width=".6" stroke-linejoin="round"/><path d="M1148.4 200.9 L1152.6 204.2 L1153.4 209.2 L1150.1 207.5Z" fill="#5ebcee" stroke="#5ebcee" stroke-width=".6" stroke-linejoin="round"/><path d="M1135.7 232.5 L1142.4 234.1 L1140.7 237.5 L1135.4 235.8Z" fill="#5ebcee" stroke="#5ebcee" stroke-width=".6" stroke-linejoin="round"/><path d="M795.2 297.0 L798.5 300.3 L801.8 307.8 L799.7 309.5Z" fill="#5ebcee" stroke="#5ebcee" stroke-width=".6" stroke-linejoin="round"/><path d="M955.3 317.8 L958.7 316.1 L957.3 321.1Z" fill="#5ebcee" stroke="#5ebcee" stroke-width=".6" stroke-linejoin="round"/><path d="M708.1 389.9 L714.7 389.9 L713.1 396.6 L708.1 401.6Z" fill="#5ebcee" stroke="#5ebcee" stroke-width=".6" stroke-linejoin="round"/><path d="M754.2 377.3 L758.4 378.6 L757.5 381.5Z" fill="#5ebcee" stroke="#5ebcee" stroke-width=".6" stroke-linejoin="round"/><path d="M795.1 394.3 L804.8 390.5 L804.4 393.8 L797.3 395.5Z" fill="#5ebcee" stroke="#5ebcee" stroke-width=".6" stroke-linejoin="round"/><path d="M850.6 435.3 L852.6 436.0 L854.0 442.0 L851.8 441.6Z" fill="#5ebcee" stroke="#5ebcee" stroke-width=".6" stroke-linejoin="round"/><path d="M878.6 429.8 L880.6 429.8 L880.3 435.6 L878.6 435.3Z" fill="#5ebcee" stroke="#5ebcee" stroke-width=".6" stroke-linejoin="round"/><path d="M938.0 440.6 L946.3 436.8 L947.1 438.9 L939.6 442.6Z" fill="#5ebcee" stroke="#5ebcee" stroke-width=".6" stroke-linejoin="round"/><path d="M1110.8 319.4 L1115.8 319.7 L1115.5 323.1 L1112.1 322.4Z" fill="#5ebcee" stroke="#5ebcee" stroke-width=".6" stroke-linejoin="round"/><path d="M1293.2 346.3 L1296.1 347.1 L1295.4 351.3 L1293.4 350.5Z" fill="#5ebcee" stroke="#5ebcee" stroke-width=".6" stroke-linejoin="round"/><path d="M1423.9 388.1 L1431.1 389.7 L1430.6 394.2 L1428.6 391.4Z" fill="#5ebcee" stroke="#5ebcee" stroke-width=".6" stroke-linejoin="round"/><path d="M1442.9 419.3 L1460.4 412.6 L1461.2 418.4 L1453.7 421.8 L1445.4 422.6Z" fill="#5ebcee" stroke="#5ebcee" stroke-width=".6" stroke-linejoin="round"/><path d="M1408 247 L1460 252 L1564 256" fill="none" stroke="#66bfe4" stroke-width=".8"/><path d="M706.9 38.2 L716.2 30.1 L730.1 25.5 L744.0 13.9 L762.5 6.9 L776.4 12.7 L792.6 9.3 L799.5 2.3 L829.6 6.9 L862.0 3.5 L885.2 1.9" fill="none" stroke="#a3d3f0" stroke-width=".9"/><path d="M887.5 6.9 L899.1 11.6 L903.7 18.5 L915.3 22.0 L931.5 32.4 L943.1 41.7 L945.4 48.6 L936.1 55.6 L922.2 62.5" fill="none" stroke="#a3d3f0" stroke-width=".9"/><path d="M922.2 62.5 L940.7 55.6 L966.2 49.8 L1000.9 46.3 L1028.7 52.1 L1061.1 67.1 L1079.6 88.0 L1093.5 108.8 L1081.9 129.6 L1061.1 148.1 L1044.9 162.0 L1040.3 175.9 L1019.4 185.2 L1003.2 187.5" fill="none" stroke="#a3d3f0" stroke-width=".9"/><path d="M763.7 148.1 L767.1 138.9 L774.1 129.6" fill="none" stroke="#a3d3f0" stroke-width=".9"/><path d="M723.1 143.5 L737.0 145.8 L746.3 157.4 L764.8 166.7 L776.4 182.9 L792.6 189.8 L801.9 206.0 L804.2 217.6" fill="none" stroke="#a3d3f0" stroke-width=".9"/><path d="M825.0 178.2 L838.9 171.3 L857.4 170.1 L871.3 175.9 L875.9 185.2 L882.9 196.8 L885.2 208.3 L878.2 222.2 L875.9 231.5 L879.4 250.0" fill="none" stroke="#a3d3f0" stroke-width=".9"/><path d="M859.7 251.6 L866.7 265.5 L878.2 286.3 L880.6 297.9 L874.8 311.8 L882.9 332.6 L892.1 346.5 L900.2 360.4 L903.7 371.9 L910.6 378.9 L917.6 388.1 L908.3 399.7 L910.6 415.9 L903.7 427.5 L910.6 441.4 L906.0 455.3 L903.7 471.5" fill="none" stroke="#a3d3f0" stroke-width=".9"/><path d="M1123.6 50.9 L1124.8 69.4 L1121.3 92.6" fill="none" stroke="#a3d3f0" stroke-width=".9"/><path d="M1158.9 171.3 L1157.8 185.2 L1160.1 203.7 L1171.7 222.2 L1176.3 250.0" fill="none" stroke="#a3d3f0" stroke-width=".9"/><path d="M1189.0 152.8 L1190.2 175.9 L1194.8 196.8 L1206.4 215.3 L1213.3 231.5 L1218.0 250.0" fill="none" stroke="#a3d3f0" stroke-width=".9"/><path d="M1429.8 82.2 L1433.2 78.7 L1454.1 78.7 L1472.6 76.4 L1481.9 92.6 L1487.6 108.8" fill="none" stroke="#a3d3f0" stroke-width=".9"/><path d="M1498.1 83.3 L1509.6 76.4 L1523.5 92.6 L1528.1 108.8" fill="none" stroke="#a3d3f0" stroke-width=".9"/><path d="M716.2 399.7 L734.7 390.5 L757.9 382.4 L771.8 380.0" fill="none" stroke="#a3d3f0" stroke-width=".9"/><path d="M712.7 420.6 L720.8 422.9 L727.8 422.9" fill="none" stroke="#a3d3f0" stroke-width=".9"/><path d="M1044.9 300.2 L1070.4 293.2 L1093.5 288.6 L1107.4 285.1 L1123.6 289.8 L1139.8 296.7" fill="none" stroke="#a3d3f0" stroke-width=".9"/><path d="M1081.9 319.9 L1105.1 316.4 L1116.7 322.2 L1128.2 325.6 L1139.8 321.0" fill="none" stroke="#a3d3f0" stroke-width=".9"/><path d="M1060.0 366.2 L1065.7 362.7 L1079.6 365.0 L1091.2 369.6" fill="none" stroke="#a3d3f0" stroke-width=".9"/><path d="M919.9 424.0 L931.5 411.3 L943.1 400.9 L954.6 393.9 L965.0 390.0" fill="none" stroke="#a3d3f0" stroke-width=".9"/><path d="M966.2 476.1 L984.7 448.3 L998.6 446.0 L1000.9 450.6 L1017.1 451.8 L1018.3 457.6" fill="none" stroke="#a3d3f0" stroke-width=".9"/><path d="M873.6 383.5 L872.5 409.0 L880.6 422.9 L879.4 435.6" fill="none" stroke="#a3d3f0" stroke-width=".9"/><path d="M1139.8 376.6 L1130.6 378.9 L1125.9 390.5" fill="none" stroke="#a3d3f0" stroke-width=".9"/><path d="M737.0 477.3 L740.5 468.0 L762.5 466.9" fill="none" stroke="#a3d3f0" stroke-width=".9"/><path d="M1130.0 295.6 L1143.9 297.9 L1160.1 309.4 L1176.3 318.7 L1185.6 332.6 L1206.4 336.1 L1227.2 329.1 L1241.1 325.6 L1255.0 331.4 L1268.9 325.6 L1278.1 330.3 L1287.4 318.7" fill="none" stroke="#a3d3f0" stroke-width=".9"/><path d="M1130.0 378.9 L1148.5 371.9 L1162.4 365.0 L1167.0 355.7 L1183.2 348.8 L1204.1 344.2 L1222.6 337.2" fill="none" stroke="#a3d3f0" stroke-width=".9"/><path d="M1229.5 240.0 L1238.8 267.8 L1252.7 284.0 L1278.1 288.6 L1296.7 295.6 L1308.2 297.9" fill="none" stroke="#a3d3f0" stroke-width=".9"/><path d="M1251.5 251.6 L1256.2 270.1 L1261.9 284.0" fill="none" stroke="#a3d3f0" stroke-width=".9"/><path d="M1256.2 355.7 L1258.5 369.6 L1255.0 383.5 L1238.8 395.1 L1224.9 395.1" fill="none" stroke="#a3d3f0" stroke-width=".9"/><path d="M1347.6 360.4 L1356.9 374.3 L1363.8 383.5 L1366.1 397.4 L1359.2 411.3 L1345.3 420.6" fill="none" stroke="#a3d3f0" stroke-width=".9"/><path d="M1308.2 391.6 L1312.9 383.5 L1317.5 378.9" fill="none" stroke="#a3d3f0" stroke-width=".9"/><path d="M1430.9 390.5 L1449.4 383.5 L1463.3 378.9 L1477.2 370.8 L1491.1 378.9 L1500.4 390.5 L1518.9 378.9 L1530.5 376.6" fill="none" stroke="#a3d3f0" stroke-width=".9"/><path d="M1440.2 422.9 L1440.2 439.1 L1444.8 448.3 L1437.9 462.2 L1440.2 476.1" fill="none" stroke="#a3d3f0" stroke-width=".9"/><path d="M1476.1 446.0 L1495.7 434.4 L1500.4 425.2 L1528.1 422.9 L1544.4 436.8 L1549.0 448.3" fill="none" stroke="#a3d3f0" stroke-width=".9"/><path d="M1487.6 403.2 L1500.4 399.7 L1523.5 411.3 L1544.4 418.2" fill="none" stroke="#a3d3f0" stroke-width=".9"/><path d="M916.4 0.0 L919.9 13.9 L929.2 25.5 L943.1 39.4 L945.4 42.8 L963.9 49.8 L966.2 64.8 L980.1 68.3 L981.2 78.7 L977.8 92.6 L989.4 99.5 L999.8 106.5 L998.6 115.7 L1007.9 126.2 L1009.0 134.3 L1019.4 138.9 L1022.9 152.8 L1020.6 162.0 L1033.3 178.2 L1034.5 185.2 L1035.6 196.8 L1047.2 208.3 L1051.9 222.2 L1054.2 231.5 L1070.4 236.1 L1075.0 250.0" fill="none" stroke="#979cab" stroke-width="1.200" stroke-dasharray="7 1.300 2 1.300"/><path d="M945.4 85.6 L954.6 88.0 L958.1 97.2 L956.9 127.3 L951.2 136.6 L947.7 145.8 L938.4 141.2 L931.5 138.9 L930.3 145.8 L924.5 157.4 L908.3 162.0 L903.7 171.3 L889.8 179.4 L882.9 178.2 L875.9 179.4 L866.7 175.9 L862.0 185.2 L852.8 189.8 L843.5 192.1 L829.6 182.9 L825.0 177.1" fill="none" stroke="#979cab" stroke-width="1.200" stroke-dasharray="7 1.300 2 1.300"/><path d="M801.9 206.0 L804.2 217.6 L815.7 219.9 L818.1 231.5 L811.1 233.8 L797.2 236.1 L788.0 250.0" fill="none" stroke="#979cab" stroke-width="1.200" stroke-dasharray="7 1.300 2 1.300"/><path d="M713.9 302.5 L723.1 293.2 L716.2 265.5 L727.8 251.6 L741.7 260.8 L757.9 263.1 L776.4 267.8 L778.7 258.5 L788.0 251.6 L794.9 240.0" fill="none" stroke="#979cab" stroke-width="1.200" stroke-dasharray="7 1.300 2 1.300"/><path d="M706.9 348.8 L713.9 339.5 L723.1 328.0 L732.4 326.8 L723.1 318.7 L711.6 319.9" fill="none" stroke="#979cab" stroke-width="1.200" stroke-dasharray="7 1.300 2 1.300"/><path d="M706.9 374.3 L716.2 360.4 L713.9 348.8" fill="none" stroke="#979cab" stroke-width="1.200" stroke-dasharray="7 1.300 2 1.300"/><path d="M1068.1 240.0 L1075.0 253.9 L1072.7 267.8 L1084.3 271.2 L1085.4 266.6 L1112.0 265.5 L1114.4 279.4 L1123.6 281.7 L1121.3 293.2 L1107.4 300.2 L1081.9 302.5 L1065.7 309.4 L1064.6 318.7 L1070.4 328.0 L1081.9 337.2 L1093.5 348.8 L1093.5 362.7 L1100.5 378.9 L1107.4 390.5 L1123.6 392.8 L1116.7 406.7 L1107.4 418.2 L1107.4 432.1 L1116.7 441.4 L1132.9 448.3 L1125.9 457.6 L1109.7 466.9 L1105.1 476.1" fill="none" stroke="#979cab" stroke-width="1.200" stroke-dasharray="7 1.300 2 1.300"/><path d="M707 450.400L742.900 466L753.300 469.400L762.700 467L764.800 471.300L771.500 477.500" fill="none" stroke="#979cab" stroke-width="1.200" stroke-dasharray="7 1.300 2 1.300"/><path d="M1282.8 88.0 L1296.7 99.5 L1315.2 115.7 L1326.8 134.3 L1345.3 148.1 L1354.5 162.0" fill="none" stroke="#ffffff" stroke-width=".9" stroke-linejoin="round" opacity=".62"/><path d="M771.8 106.5 L778.7 120.4 L785.6 136.6 L797.2 162.0 L808.8 178.2 L825.0 199.1 L838.9 208.3 L857.4 222.2 L875.9 231.5" fill="none" stroke="#ffffff" stroke-width=".9" stroke-linejoin="round" opacity=".62"/><path d="M706.9 150.5 L727.8 143.5 L746.3 136.6 L769.4 125.0 L776.4 108.8" fill="none" stroke="#ffffff" stroke-width=".9" stroke-linejoin="round" opacity=".62"/><path d="M875.9 231.5 L896.8 203.7 L908.3 196.8 L922.2 185.2 L933.8 162.0 L945.4 148.1 L956.9 129.6" fill="none" stroke="#ffffff" stroke-width=".9" stroke-linejoin="round" opacity=".62"/><path d="M896.8 203.7 L908.3 217.6 L917.6 231.5 L922.2 250.0" fill="none" stroke="#ffffff" stroke-width=".9" stroke-linejoin="round" opacity=".62"/><path d="M1505.0 300.6 L1509.6 316.4 L1523.5 337.2 L1532.8 355.7 L1536.2 378.9 L1544.4 402.0 L1546.7 420.6 L1558.2 432.1" fill="none" stroke="#ffffff" stroke-width=".9" stroke-linejoin="round" opacity=".62"/><path d="M1407.0 187.8 L1416.3 171.1 L1431.1 147.0 L1445.9 121.1 L1457.0 115.6" fill="none" stroke="#ffffff" stroke-width=".9" stroke-linejoin="round" opacity=".62"/><path d="M1457.0 115.6 L1455.2 89.6 L1468.1 74.8 L1483.0 78.5 L1495.9 82.2" fill="none" stroke="#ffffff" stroke-width=".9" stroke-linejoin="round" opacity=".62"/><path d="M889.8 6.9 L908.3 18.5 L931.5 34.7 L943.1 44.0 L938.4 57.9 L943.1 76.4 L945.4 85.6" fill="none" stroke="#ffffff" stroke-width=".9" stroke-linejoin="round" opacity=".62"/><path d="M1070.4 0.0 L1072.7 18.5 L1081.9 41.7 L1102.8 55.6 L1123.6 60.2 L1128.2 76.4 L1125.9 101.9 L1116.7 120.4 L1107.4 134.3" fill="none" stroke="#ffffff" stroke-width=".9" stroke-linejoin="round" opacity=".62"/><path d="M706.9 130.8 L746.3 133.1 L788.0 134.3 L811.1 118.1 L825.0 112.3 L873.6 123.8 L931.5 120.4 L977.8 126.2 L1035.6 126.2 L1093.5 118.1 L1107.4 115.7" fill="none" stroke="#ffffff" stroke-width="1.200" stroke-linejoin="round" opacity=".82"/><path d="M1153.1 108.8 L1187.9 101.9 L1222.6 90.3 L1257.3 81.0" fill="none" stroke="#ffffff" stroke-width="1.200" stroke-linejoin="round" opacity=".82"/><path d="M1130.0 443.7 L1153.1 441.4 L1176.3 429.8 L1199.4 411.3 L1213.3 388.1 L1222.6 369.6 L1234.2 353.4 L1259.6 334.9 L1287.4 316.4 L1305.9 304.8 L1326.8 288.6 L1349.9 272.4 L1361.5 263.1 L1375.4 249.3" fill="none" stroke="#ffffff" stroke-width="1.200" stroke-linejoin="round" opacity=".82"/><path d="M1400.8 277.0 L1403.1 293.2 L1399.7 318.7 L1407.8 337.2 L1411.2 355.7 L1405.5 383.5 L1400.8 402.0 L1393.9 418.2 L1382.3 436.8 L1375.4 448.3 L1374.2 471.5" fill="none" stroke="#ffffff" stroke-width="1.200" stroke-linejoin="round" opacity=".82"/><path d="M910.6 270.1 L924.5 284.0 L945.4 286.3 L966.2 302.5 L1000.9 319.9 L1035.6 316.4 L1070.4 311.8 L1093.5 311.8 L1139.8 316.4 L1169.2 315.0 L1190.0 323.1 L1203.9 324.3 L1215.5 334.7" fill="none" stroke="#ffffff" stroke-width="1.200" stroke-linejoin="round" opacity=".82"/><path d="M910.6 270.1 L892.1 293.2 L901.4 321.0 L910.6 351.1 L925.7 384.7 L919.9 399.7 L918.8 425.2 L913.0 448.3 L909.5 471.5" fill="none" stroke="#ffffff" stroke-width="1.200" stroke-linejoin="round" opacity=".82"/><path d="M885.2 251.6 L910.6 270.1 L922.2 253.9 L917.6 240.0" fill="none" stroke="#ffffff" stroke-width="1.200" stroke-linejoin="round" opacity=".82"/><path d="M706.9 240.3 L727.8 238.4 L757.9 231.5 L788.0 222.2 L799.5 215.3 L811.1 207.2" fill="none" stroke="#ef9547" stroke-width="2.200" stroke-linejoin="round"/><path d="M1401.5 192.4 L1416.3 189.6 L1423.7 182.2 L1431.1 183.1 L1440.4 185.9 L1447.8 185.0 L1457.0 169.3 L1468.1 163.7 L1473.7 160.0 L1479.3 143.3 L1484.8 128.5 L1484.8 121.1 L1488.5 115.6 L1494.1 114.6 L1501.5 117.4 L1507.0 116.5" fill="none" stroke="#ecc353" stroke-width="2.200" stroke-linejoin="round"/><path d="M1381.1 211.9 L1376.5 221.1 L1377.4 232.2 L1378.9 245.2 L1375.6 260.0" fill="none" stroke="#ecc353" stroke-width="2.200" stroke-linejoin="round"/><path d="M1376.5 240.0 L1377.7 258.5 L1386.9 267.8 L1400.8 277.0 L1419.4 284.0 L1425.1 280.5 L1437.9 282.8 L1447.1 272.4 L1477.2 271.9 L1483.0 274.7 L1488.8 289.8 L1495.7 300.2 L1505.0 300.6" fill="none" stroke="#ecc353" stroke-width="2.200" stroke-linejoin="round"/><path d="M811.1 209.4 L824.4 203.9 L838.3 196.4 L842.8 197.0 L852.2 201.4 L856.7 201.1 L860.6 198.9 L866.1 193.3 L871.7 190.8 L880.6 189.4 L908.3 188.7 L933.8 185.9 L954.6 187.5 L977.8 188.7 L996.3 194.4 L1012.5 197.2 L1024.1 194.4 L1040.3 187.5 L1058.8 184.5 L1075.0 177.1 L1093.5 171.3 L1116.7 165.5 L1139.8 163.9 L1148.5 164.8 L1169.4 163.9 L1192.5 165.5 L1211.0 166.7 L1222.6 159.7 L1229.5 159.3 L1238.8 164.8 L1252.7 166.2 L1264.3 163.2 L1280.5 156.2 L1296.7 152.8 L1315.2 153.5 L1333.7 157.4 L1345.3 160.9 L1353.4 162.3 L1368.0 185.0 L1384.0 192.0" fill="none" stroke="#fb0529" stroke-width="3.700" stroke-linejoin="round" stroke-linecap="round"/><circle cx="810.900" cy="189.900" r="16.100" fill="#fff" stroke="#fa0024" stroke-width="3.600"/><circle cx="810.900" cy="189.900" r="6" fill="#fa0024"/><circle cx="1395.500" cy="208.500" r="16" fill="#fff" stroke="#fa0024" stroke-width="2.200"/><circle cx="1398.500" cy="209.300" r="16.500" fill="#fff" stroke="#fa0024" stroke-width="2.200"/><path d="M1381.500 212.500h8" stroke="#fa0024" stroke-width="1.500" fill="none"/><circle cx="1384.300" cy="190.600" r="15.800" fill="#fff" stroke="#fa0024" stroke-width="2.300"/><g fill="none" stroke="#fa0024" stroke-width="1.600" stroke-linecap="round"><path d="M1368.800 185.800L1377.500 188.600M1368.800 188.600H1377.500C1382 189 1385 192.500 1385.200 196.800H1382M1375.500 196.800H1368.800M1388.200 183.300V199.200M1390.900 188.800V199.200"/><circle cx="1378.800" cy="195.800" r="2.800" fill="#fff"/></g><path d="M1400 230.800C1396 222.500 1388.900 212.500 1388.900 204A11.150 11.150 0 0 1 1411.200 204C1411.200 212.500 1404 222.500 1400 230.800Z" fill="#dc0000"/><circle cx="1399.800" cy="204" r="2.900" fill="#fff"/><circle cx="725.800" cy="457.900" r="10.900" fill="#fff" stroke="#a39f99" stroke-width="1.600" opacity=".95"/><path d="M720.800 462.300v-5.500a5.600 5.600 0 0 1 5.800-5.500c3 0 5.400 2.200 5.400 5.200s-2.500 5.800-5.800 5.800z" fill="#a9a5a0"/><path d="M727.800 453.800l.9 1.900 1.900.9-1.900.9-.9 1.900-.9-1.900-1.900-.9 1.900-.9z" fill="#fff"/><text x="740.300" y="463" font-size="18.500" font-weight="700" fill="#fff" stroke="#a39f99" stroke-width="1.800" paint-order="stroke" stroke-linejoin="round" textLength="71" lengthAdjust="spacingAndGlyphs">mapbox</text><rect x="1259" y="455" width="305" height="23" fill="#86827e"/><text x="1265" y="470.300" font-size="12.500" fill="#aaa7a2" textLength="174.700" lengthAdjust="spacing">© Mapbox © OpenStreetMap</text><text x="1446.700" y="470.300" font-size="12.500" font-weight="700" fill="#aaa7a2" textLength="111.500" lengthAdjust="spacing">Improve this map</text></g></svg>
<div class="b" style="left:707px;top:0;width:857px;height:478px;overflow:hidden"><div class="b" style="left:-707px;top:0;width:1920px;height:478px">
<span class="t" style="left:738.2px;top:89.6px;font-size:14.5px;color:#1b1b1b;font-weight:700;letter-spacing:0.409px;text-shadow:1.2px 0px 0 #f6f2ec,-1.2px 0px 0 #f6f2ec,0px 1.2px 0 #f6f2ec,0px -1.2px 0 #f6f2ec,0.9px 0.9px 0 #f6f2ec,-0.9px 0.9px 0 #f6f2ec,0.9px -0.9px 0 #f6f2ec,-0.9px -0.9px 0 #f6f2ec,0 0 1.500px #f6f2ec;">Сливен</span>
<span class="t" style="left:849.3px;top:234.9px;font-size:14.5px;color:#1b1b1b;font-weight:700;letter-spacing:-0.156px;text-shadow:1.2px 0px 0 #f6f2ec,-1.2px 0px 0 #f6f2ec,0px 1.2px 0 #f6f2ec,0px -1.2px 0 #f6f2ec,0.9px 0.9px 0 #f6f2ec,-0.9px 0.9px 0 #f6f2ec,0.9px -0.9px 0 #f6f2ec,-0.9px -0.9px 0 #f6f2ec,0 0 1.500px #f6f2ec;">Ямбол</span>
<span class="t" style="left:1370.7px;top:228.0px;font-size:15px;color:#1b1b1b;font-weight:700;letter-spacing:-0.066px;text-shadow:1.2px 0px 0 #f6f2ec,-1.2px 0px 0 #f6f2ec,0px 1.2px 0 #f6f2ec,0px -1.2px 0 #f6f2ec,0.9px 0.9px 0 #f6f2ec,-0.9px 0.9px 0 #f6f2ec,0.9px -0.9px 0 #f6f2ec,-0.9px -0.9px 0 #f6f2ec,0 0 1.500px #f6f2ec;">Бургас</span>
<span class="t" style="left:980.8px;top:29.8px;font-size:13.5px;color:#4f4f4f;letter-spacing:0.096px;text-shadow:1.2px 0px 0 #f6f2ec,-1.2px 0px 0 #f6f2ec,0px 1.2px 0 #f6f2ec,0px -1.2px 0 #f6f2ec,0.9px 0.9px 0 #f6f2ec,-0.9px 0.9px 0 #f6f2ec,0.9px -0.9px 0 #f6f2ec,-0.9px -0.9px 0 #f6f2ec,0 0 1.500px #f6f2ec;-webkit-text-stroke:.350px #4f4f4f;">Сунгурларе</span>
<span class="t" style="left:938.9px;top:150.6px;font-size:13.5px;color:#4f4f4f;letter-spacing:0.093px;text-shadow:1.2px 0px 0 #f6f2ec,-1.2px 0px 0 #f6f2ec,0px 1.2px 0 #f6f2ec,0px -1.2px 0 #f6f2ec,0.9px 0.9px 0 #f6f2ec,-0.9px 0.9px 0 #f6f2ec,0.9px -0.9px 0 #f6f2ec,-0.9px -0.9px 0 #f6f2ec,0 0 1.500px #f6f2ec;-webkit-text-stroke:.350px #4f4f4f;">Стралджа</span>
<span class="t" style="left:1099.3px;top:113.6px;font-size:13.5px;color:#4f4f4f;letter-spacing:0.233px;text-shadow:1.2px 0px 0 #f6f2ec,-1.2px 0px 0 #f6f2ec,0px 1.2px 0 #f6f2ec,0px -1.2px 0 #f6f2ec,0.9px 0.9px 0 #f6f2ec,-0.9px 0.9px 0 #f6f2ec,0.9px -0.9px 0 #f6f2ec,-0.9px -0.9px 0 #f6f2ec,0 0 1.500px #f6f2ec;-webkit-text-stroke:.350px #4f4f4f;">Карнобат</span>
<span class="t" style="left:1278.8px;top:3.0px;font-size:13.5px;color:#4f4f4f;letter-spacing:-0.526px;text-shadow:1.2px 0px 0 #f6f2ec,-1.2px 0px 0 #f6f2ec,0px 1.2px 0 #f6f2ec,0px -1.2px 0 #f6f2ec,0.9px 0.9px 0 #f6f2ec,-0.9px 0.9px 0 #f6f2ec,0.9px -0.9px 0 #f6f2ec,-0.9px -0.9px 0 #f6f2ec,0 0 1.500px #f6f2ec;-webkit-text-stroke:.350px #4f4f4f;">Руен</span>
<span class="t" style="left:1257.8px;top:75.2px;font-size:13.5px;color:#4f4f4f;letter-spacing:0.039px;text-shadow:1.2px 0px 0 #f6f2ec,-1.2px 0px 0 #f6f2ec,0px 1.2px 0 #f6f2ec,0px -1.2px 0 #f6f2ec,0.9px 0.9px 0 #f6f2ec,-0.9px 0.9px 0 #f6f2ec,0.9px -0.9px 0 #f6f2ec,-0.9px -0.9px 0 #f6f2ec,0 0 1.500px #f6f2ec;-webkit-text-stroke:.350px #4f4f4f;">Айтос</span>
<span class="t" style="left:1271.7px;top:135.4px;font-size:13.5px;color:#4f4f4f;letter-spacing:0.118px;text-shadow:1.2px 0px 0 #f6f2ec,-1.2px 0px 0 #f6f2ec,0px 1.2px 0 #f6f2ec,0px -1.2px 0 #f6f2ec,0.9px 0.9px 0 #f6f2ec,-0.9px 0.9px 0 #f6f2ec,0.9px -0.9px 0 #f6f2ec,-0.9px -0.9px 0 #f6f2ec,0 0 1.500px #f6f2ec;-webkit-text-stroke:.350px #4f4f4f;">Българово</span>
<span class="t" style="left:1273.5px;top:171.9px;font-size:13.5px;color:#4f4f4f;letter-spacing:0.155px;text-shadow:1.2px 0px 0 #f6f2ec,-1.2px 0px 0 #f6f2ec,0px 1.2px 0 #f6f2ec,0px -1.2px 0 #f6f2ec,0.9px 0.9px 0 #f6f2ec,-0.9px 0.9px 0 #f6f2ec,0.9px -0.9px 0 #f6f2ec,-0.9px -0.9px 0 #f6f2ec,0 0 1.500px #f6f2ec;-webkit-text-stroke:.350px #4f4f4f;">Камено</span>
<span class="t" style="left:1248.5px;top:212.4px;font-size:13px;color:#4f4f4f;letter-spacing:-0.467px;text-shadow:1.2px 0px 0 #f6f2ec,-1.2px 0px 0 #f6f2ec,0px 1.2px 0 #f6f2ec,0px -1.2px 0 #f6f2ec,0.9px 0.9px 0 #f6f2ec,-0.9px 0.9px 0 #f6f2ec,0.9px -0.9px 0 #f6f2ec,-0.9px -0.9px 0 #f6f2ec,0 0 1.500px #f6f2ec;-webkit-text-stroke:.350px #4f4f4f;">Равнец</span>
<span class="t" style="left:1407.0px;top:106.6px;font-size:13.5px;color:#4f4f4f;letter-spacing:0.221px;text-shadow:1.2px 0px 0 #f6f2ec,-1.2px 0px 0 #f6f2ec,0px 1.2px 0 #f6f2ec,0px -1.2px 0 #f6f2ec,0.9px 0.9px 0 #f6f2ec,-0.9px 0.9px 0 #f6f2ec,0.9px -0.9px 0 #f6f2ec,-0.9px -0.9px 0 #f6f2ec,0 0 1.500px #f6f2ec;-webkit-text-stroke:.350px #4f4f4f;">Каблешково</span>
<span class="t" style="left:1501.0px;top:106.2px;font-size:13.5px;color:#4f4f4f;letter-spacing:0.168px;text-shadow:1.2px 0px 0 #f6f2ec,-1.2px 0px 0 #f6f2ec,0px 1.2px 0 #f6f2ec,0px -1.2px 0 #f6f2ec,0.9px 0.9px 0 #f6f2ec,-0.9px 0.9px 0 #f6f2ec,0.9px -0.9px 0 #f6f2ec,-0.9px -0.9px 0 #f6f2ec,0 0 1.500px #f6f2ec;-webkit-text-stroke:.350px #4f4f4f;">Несебър</span>
<span class="t" style="left:1515.4px;top:66.1px;font-size:13.5px;color:#4f4f4f;letter-spacing:-0.539px;text-shadow:1.2px 0px 0 #f6f2ec,-1.2px 0px 0 #f6f2ec,0px 1.2px 0 #f6f2ec,0px -1.2px 0 #f6f2ec,0.9px 0.9px 0 #f6f2ec,-0.9px 0.9px 0 #f6f2ec,0.9px -0.9px 0 #f6f2ec,-0.9px -0.9px 0 #f6f2ec,0 0 1.500px #f6f2ec;-webkit-text-stroke:.350px #4f4f4f;">Свети Влас</span>
<span class="t" style="left:1446.7px;top:173.8px;font-size:13.5px;color:#4f4f4f;letter-spacing:-0.044px;text-shadow:1.2px 0px 0 #f6f2ec,-1.2px 0px 0 #f6f2ec,0px 1.2px 0 #f6f2ec,0px -1.2px 0 #f6f2ec,0.9px 0.9px 0 #f6f2ec,-0.9px 0.9px 0 #f6f2ec,0.9px -0.9px 0 #f6f2ec,-0.9px -0.9px 0 #f6f2ec,0 0 1.500px #f6f2ec;-webkit-text-stroke:.350px #4f4f4f;">Поморие</span>
<span class="t" style="left:1260.3px;top:300.8px;font-size:13.5px;color:#4f4f4f;letter-spacing:-0.301px;text-shadow:1.2px 0px 0 #f6f2ec,-1.2px 0px 0 #f6f2ec,0px 1.2px 0 #f6f2ec,0px -1.2px 0 #f6f2ec,0.9px 0.9px 0 #f6f2ec,-0.9px 0.9px 0 #f6f2ec,0.9px -0.9px 0 #f6f2ec,-0.9px -0.9px 0 #f6f2ec,0 0 1.500px #f6f2ec;-webkit-text-stroke:.350px #4f4f4f;">Дебелт</span>
<span class="t" style="left:1213.3px;top:338.1px;font-size:13.5px;color:#4f4f4f;letter-spacing:0.221px;text-shadow:1.2px 0px 0 #f6f2ec,-1.2px 0px 0 #f6f2ec,0px 1.2px 0 #f6f2ec,0px -1.2px 0 #f6f2ec,0.9px 0.9px 0 #f6f2ec,-0.9px 0.9px 0 #f6f2ec,0.9px -0.9px 0 #f6f2ec,-0.9px -0.9px 0 #f6f2ec,0 0 1.500px #f6f2ec;-webkit-text-stroke:.350px #4f4f4f;">Средец</span>
<span class="t" style="left:1490.0px;top:285.3px;font-size:13.5px;color:#4f4f4f;letter-spacing:0.106px;text-shadow:1.2px 0px 0 #f6f2ec,-1.2px 0px 0 #f6f2ec,0px 1.2px 0 #f6f2ec,0px -1.2px 0 #f6f2ec,0.9px 0.9px 0 #f6f2ec,-0.9px 0.9px 0 #f6f2ec,0.9px -0.9px 0 #f6f2ec,-0.9px -0.9px 0 #f6f2ec,0 0 1.500px #f6f2ec;-webkit-text-stroke:.350px #4f4f4f;">Созопол</span>
<span class="t" style="left:1511.5px;top:394.1px;font-size:13.5px;color:#4f4f4f;letter-spacing:0.516px;text-shadow:1.2px 0px 0 #f6f2ec,-1.2px 0px 0 #f6f2ec,0px 1.2px 0 #f6f2ec,0px -1.2px 0 #f6f2ec,0.9px 0.9px 0 #f6f2ec,-0.9px 0.9px 0 #f6f2ec,0.9px -0.9px 0 #f6f2ec,-0.9px -0.9px 0 #f6f2ec,0 0 1.500px #f6f2ec;-webkit-text-stroke:.350px #4f4f4f;">Приморско</span>
<span class="t" style="left:881.7px;top:465.4px;font-size:13.5px;color:#4f4f4f;letter-spacing:-0.166px;text-shadow:1.2px 0px 0 #f6f2ec,-1.2px 0px 0 #f6f2ec,0px 1.2px 0 #f6f2ec,0px -1.2px 0 #f6f2ec,0.9px 0.9px 0 #f6f2ec,-0.9px 0.9px 0 #f6f2ec,0.9px -0.9px 0 #f6f2ec,-0.9px -0.9px 0 #f6f2ec,0 0 1.500px #f6f2ec;-webkit-text-stroke:.350px #4f4f4f;">Елхово</span>
</div></div>
<div class="b" style="left:309px;top:0;width:1px;height:741px;background:#222424"></div>
<div class="b" style="left:1598px;top:0;width:1px;height:741px;background:#252727"></div>
<div class="b" style="left:380px;top:240px;width:294px;height:1px;background:#202221"></div>
<div class="b" style="left:380px;top:526px;width:294px;height:1px;background:#202221"></div>
<div class="b" style="left:1911px;top:307px;width:6px;height:111px;border-radius:3px;background:#262a2b"></div>
<span class="t" style="left:473.6px;top:25.1px;font-size:20px;color:#aea79d;letter-spacing:0.824px;">Пробег</span>
<span class="t" style="left:473.6px;top:55.4px;font-size:18px;color:#7f786f;letter-spacing:0.724px;">97 км.</span>
<span class="t" style="left:473.6px;top:153.4px;font-size:20px;color:#aea79d;letter-spacing:0.605px;">Продължителност</span>
<span class="t" style="left:473.6px;top:183.6px;font-size:18px;color:#7f786f;letter-spacing:0.600px;">1ч. 15мин.</span>
<span class="t" style="left:473.6px;top:282.1px;font-size:20px;color:#aea79d;letter-spacing:0.542px;">Средна скорост</span>
<span class="t" style="left:473.6px;top:312.8px;font-size:18px;color:#7f786f;letter-spacing:1.155px;">77 км./ч.</span>
<span class="t" style="left:473.6px;top:410.4px;font-size:20px;color:#aea79d;letter-spacing:0.392px;">Максимална</span>
<span class="t" style="left:473.6px;top:438.6px;font-size:20px;color:#aea79d;letter-spacing:0.581px;">скорост</span>
<span class="t" style="left:473.6px;top:469.8px;font-size:18px;color:#7f786f;letter-spacing:0.914px;">146 км./ч.</span>
<span class="t" style="left:473.6px;top:565.9px;font-size:20px;color:#aea79d;letter-spacing:0.811px;">Внезапни спирачки</span>
<span class="t" style="left:472.6px;top:596.5px;font-size:18px;color:#7f786f;">1</span>
<span class="t" style="left:473.6px;top:695.0px;font-size:20px;color:#aea79d;letter-spacing:0.476px;">Hard Accl</span>
<span class="t" style="left:473.6px;top:724.3px;font-size:18px;color:#7f786f;">4</span>
<svg class="b" style="left:0;top:0" width="1920" height="741" viewBox="0 0 1920 741" fill="none" stroke="#8b8379" stroke-width="1.4" stroke-linecap="round" stroke-linejoin="round"><path d="M411 63.200H408.700A16.200 16.200 0 1 1 431.300 63.200H428.500"/><circle cx="419.700" cy="52.400" r="4"/><path d="M422.400 49.400 L427 44 M428.500 42 L430 40.300"/><rect x="411" y="58.8" width="17.5" height="6.6" rx="1"/><path d="M415.2 58.8v6.6M419.6 58.8v6.6M424 58.8v6.6"/><circle cx="420.2" cy="176.6" r="16"/><path d="M419.5 165.8V176.6H428.5"/><path d="M408.5 318.4 C405.5 314 405 310 405 308.5 A15.5 15.5 0 0 1 436 308.5 C436 310 435.5 314 432.5 318.4 Z"/><circle cx="420.5" cy="309.3" r="4.2"/><path d="M420.5 305V298"/><path d="M407.5 447 C404.5 443 403.6 439 403.6 437 A16.4 16.4 0 0 1 436.4 437 C436.4 439 435.5 443 432.5 447 Z"/><circle cx="419.5" cy="437.6" r="4.2"/><path d="M423.8 438.3 H431.5 C431.8 436.5 431.3 435 430.5 433.5"/><path d="M412.5 429 A10 10 0 0 1 427.5 429.5" stroke-dasharray="2.2 1.6"/><path d="M405 583.2 L414.5 586.8 M405 588 H414.5 C421 586.5 426.5 590 427.5 598.5 H422.5 M413.5 598.5 H405 M431 581.5V600.5 M435 588V600.5"/><circle cx="418" cy="597.5" r="4"/><path d="M418 708.2 L427 712.5 M418 714 H427 C433 714.5 437 719 437.5 724.5 H432 M423 724.5 H417 M403.5 724.5 H413.5 M409 717 H413.5 M406.5 713.8 H413.5 M411.5 708.2 H413.5"/><circle cx="427.5" cy="723.5" r="4"/><path d="M757 521 H749.9 V539.1 H768.3 V532" stroke="#9c948a" stroke-width="1.8" stroke-linecap="butt" stroke-linejoin="miter"/><path d="M758.5 531 L768 521.5 M761 521 H768.4 V528.4" stroke="#9c948a" stroke-width="1.8" stroke-linecap="butt" stroke-linejoin="miter"/><circle cx="760.7" cy="608.6" r="10.6" stroke="#c4162f" stroke-width="2"/><circle cx="760.7" cy="608.6" r="5.4" fill="#c4162f" stroke="none"/><path d="M760.6 621.5V664.5" stroke="#7a736b" stroke-width="1"/><path d="M760.7 686.7 C757 680.5 753.3 676 753.3 672 A7.4 7.4 0 0 1 768.1 672 C768.1 676 764.4 680.5 760.7 686.7 Z" fill="#c4162f" stroke="none"/><circle cx="760.7" cy="671.6" r="2.1" fill="#1d1f1e" stroke="none"/><path d="M1512.8 528.6 L1520 535.6 L1527.3 528.6" stroke="#3b3c3a" stroke-width="1.3"/></svg>
<span class="t" style="left:787.0px;top:519.9px;font-size:17px;color:#b3aca2;letter-spacing:1.000px;">Експорт</span>
<span class="t" style="left:846.0px;top:603.4px;font-size:15.3px;color:#5d5852;letter-spacing:0.802px;">Hadjidimitrovo, Bulgaria</span>
<span class="t" style="left:844.3px;top:672.3px;font-size:15px;color:#aaa39a;letter-spacing:0.854px;">Черноморски Пехотен Полк, Burgas 8001, Bulgaria</span>
<div class="b" style="left:1372px;top:501px;width:191px;height:61px;border:1px solid #252726"></div>
<span class="t" style="left:1396.0px;top:525.8px;font-size:17.3px;color:#a9a49c;letter-spacing:1.661px;">Лично</span>
<div class="b" style="left:0;top:741px;width:1920px;height:339px;background:#1d1f1e"></div>
<div class="b" style="left:0;top:741px;width:1920px;height:1px;background:#27292a"></div>
<div class="b" style="left:0;top:773px;width:1920px;height:1px;background:#27292a"></div>
<div class="b" style="left:0;top:804px;width:1920px;height:1px;background:#27292a"></div>
<span class="t" style="left:69.4px;top:751.0px;font-size:13px;color:#b1b1b3;letter-spacing:0.014px;">Inspector</span>
<span class="t" style="left:165.8px;top:751.0px;font-size:13px;color:#b1b1b3;letter-spacing:-0.334px;">Console</span>
<span class="t" style="left:254.5px;top:751.0px;font-size:13px;color:#b1b1b3;letter-spacing:-0.044px;">Debugger</span>
<span class="t" style="left:353.3px;top:751.0px;font-size:13px;color:#ffffff;letter-spacing:0.469px;">Network</span>
<span class="t" style="left:446.0px;top:751.0px;font-size:13px;color:#b1b1b3;letter-spacing:0.029px;">Style Editor</span>
<span class="t" style="left:555.3px;top:751.0px;font-size:13px;color:#b1b1b3;letter-spacing:-0.002px;">Performance</span>
<span class="t" style="left:672.5px;top:751.0px;font-size:13px;color:#b1b1b3;letter-spacing:0.109px;">Memory</span>
<span class="t" style="left:761.7px;top:751.0px;font-size:13px;color:#b1b1b3;letter-spacing:-0.041px;">Storage</span>
<span class="t" style="left:849.0px;top:751.0px;font-size:13px;color:#b1b1b3;letter-spacing:0.125px;">Accessibility</span>
<span class="t" style="left:962.8px;top:751.0px;font-size:13px;color:#b1b1b3;letter-spacing:0.229px;">Application</span>
<div class="b" style="left:320px;top:742px;width:92px;height:2px;background:#0a84ff"></div>
<div class="b" style="left:36px;top:746px;width:1px;height:22px;background:#343636"></div>
<div class="b" style="left:36px;top:778px;width:1px;height:22px;background:#343636"></div>
<svg class="b" style="left:0;top:741px" width="1920" height="64" viewBox="0 741 1920 64" fill="none" stroke="#c4c4c6" stroke-width="1.8" stroke-linejoin="round" stroke-linecap="round"><path d="M16 764.2H12a2.200 2.200 0 0 1-2.200-2.200V753.400a2.200 2.200 0 0 1 2.200-2.200H23a2.200 2.200 0 0 1 2.200 2.200V756"/><path d="M17.5 756.5l8.200 3-3.400 1.200 2.800 3.200-1.500 1.200-2.700-3.300-1.800 2.800z" fill="#c4c4c6" stroke="none"/><rect x="48.6" y="752.4" width="10.4" height="10.4" rx="2.200" fill="#0c0c0d"/><path d="M53.800 749.400v3M53.800 762.800v3M45.600 757.600h3M59 757.600h3"/><rect x="142" y="751" width="15" height="13" rx="2" fill="#0c0c0d"/><path d="M145.800 754.800l2.800 2.700-2.800 2.700" stroke-width="1.300"/><path d="M231 751.500h10.500l4.500 6-4.500 6H231z" fill="#0c0c0d"/><path d="M333.400 765V751.500M329.500 755.400l3.900-4 3.900 4M342.400 750.500V764M338.500 760.100l3.900 4 3.900-4" stroke="#fff" stroke-width="1.700"/><path d="M427.800 750.500c-2.200 0-2.600 1-2.600 2.600v2.200c0 1.300-.8 2.200-2 2.200 1.200 0 2 .9 2 2.200v2.200c0 1.600.4 2.600 2.600 2.600M432.200 750.500c2.200 0 2.600 1 2.600 2.600v2.200c0 1.300.8 2.200 2 2.200-1.200 0-2 .9-2 2.200v2.200c0 1.600-.4 2.600-2.600 2.600" stroke-width="1.500"/><path d="M533.800 764a8 8 0 1 1 11.600 0"/><path d="M539.300 762.300l3-6.800" /><circle cx="539.200" cy="762.500" r="1.500" fill="#c4c4c6" stroke="none"/><rect x="651.800" y="750.800" width="8" height="13.600" rx="2" fill="#0c0c0d"/><path d="M648 753.800h2.500M648 757.600h2.500M648 761.400h2.500M661 753.800h2.500M661 757.600h2.500M661 761.400h2.500" stroke-width="1.200"/><rect x="739.800" y="750.400" width="13.200" height="14.600" rx="2" fill="#0c0c0d"/><path d="M739.800 757.700h13.200M744.800 754.200h3.200M744.800 761.400h3.200" stroke-width="1.300"/><circle cx="833.300" cy="751.300" r="1.700" fill="#c4c4c6" stroke="none"/><path d="M826.600 754.200h13.400v2.200h-4.400v9h-1.700v-4.600h-1.200v4.600H831v-9h-4.400z" fill="#c4c4c6" stroke="none"/><rect x="940.2" y="750.4" width="3.400" height="3.400" rx=".8" stroke-width="1"/><rect x="940.2" y="755.8" width="3.400" height="3.400" rx=".8" stroke-width="1"/><rect x="940.2" y="761.2" width="3.400" height="3.400" rx=".8" stroke-width="1"/><rect x="945.6" y="750.4" width="3.400" height="3.400" rx=".8" stroke-width="1"/><rect x="945.6" y="755.8" width="3.400" height="3.400" rx=".8" stroke-width="1"/><rect x="945.6" y="761.2" width="3.400" height="3.400" rx=".8" stroke-width="1"/><rect x="951.0" y="750.4" width="3.400" height="3.400" rx=".8" stroke-width="1"/><rect x="951.0" y="755.8" width="3.400" height="3.400" rx=".8" stroke-width="1"/><rect x="951.0" y="761.2" width="3.400" height="3.400" rx=".8" stroke-width="1"/><circle cx="1773.300" cy="757.500" r="6.200" fill="#ff3b6b" stroke="none"/><path d="M1773.300 753.800v4.200" stroke="#1d1f1e" stroke-width="1.600"/><circle cx="1773.300" cy="760.800" r="1" fill="#1d1f1e" stroke="none"/><rect x="1801" y="751" width="16" height="13.400" rx="2.400" fill="#0c0c0d"/><path d="M1801 755.200h16M1806.400 755.200v9" stroke-width="1.300"/><path d="M1828.500 746v22" stroke="#343636" stroke-width="1"/><path d="M1844 752.500v-1a1.500 1.500 0 0 1 1.500-1.500h9a1.500 1.500 0 0 1 1.500 1.500v12a1.500 1.500 0 0 1-1.500 1.500h-5"/><rect x="1840" y="754.400" width="7" height="10.600" rx="1.400" fill="#0c0c0d"/><circle cx="1871.500" cy="757.500" r="1.700" fill="#c4c4c6" stroke="none"/><circle cx="1877.500" cy="757.500" r="1.700" fill="#c4c4c6" stroke="none"/><circle cx="1883.500" cy="757.500" r="1.700" fill="#c4c4c6" stroke="none"/><path d="M1901 752.400l10.600 10.400M1911.600 752.400l-10.600 10.400" stroke-width="1.700"/><path d="M12.600 783.200h11.400M15.800 783v-1.600h5v1.600M13.600 783.400l.7 12.200a1.600 1.600 0 0 0 1.600 1.500h4.800a1.600 1.600 0 0 0 1.600-1.500l.7-12.200" stroke-width="1.400" stroke="#b4b4b6"/><rect x="15.600" y="785.600" width="5.400" height="8.800" fill="#6f6f71" stroke="none"/><path d="M48.600 784h8.600l-3.300 4.600v5.400l-2 -1.600v-3.800z" stroke="#8f8f91" stroke-width="1.100" fill="#4a4a4c"/><circle cx="1122" cy="789" r="9.200" fill="#b1b1b3" stroke="none"/><path d="M1118.300 785.300l7.400 7.400M1125.700 785.300l-7.400 7.400" stroke="#1d1f1e" stroke-width="2"/><path d="M1137.500 778v22M1232.500 778v22M1663.500 778v22M1774 778v22M1884.500 778v22" stroke="#343636" stroke-width="1"/><path d="M1150.300 783.500v10M1158.700 783.500v10" stroke-width="1.200" stroke="#b4b4b6"/><circle cx="1181.800" cy="786.800" r="4.300" stroke-width="1.700"/><path d="M1185 790.200l5.200 5.200" stroke-width="1.900"/><circle cx="1215.500" cy="789.300" r="5.700" stroke-width="1.800"/><path d="M1211.600 785.400l7.800 7.800" stroke-width="1.800"/><rect x="1672" y="783" width="13" height="13" rx="2" fill="#2b2a33" stroke="#8f8f9d" stroke-width="1.300"/><path d="M1864.800 787.200l2.600-3 2.600 3zM1864.800 790.800l2.600 3 2.600-3z" fill="#b1b1b3" stroke="none"/><circle cx="1901.600" cy="789" r="4.100" stroke-width="2.200"/><path d="M1907.00 789.00L1910.20 789.00" stroke-width="2.200" stroke-linecap="butt"/><path d="M1905.42 792.82L1907.68 795.08" stroke-width="2.200" stroke-linecap="butt"/><path d="M1901.60 794.40L1901.60 797.60" stroke-width="2.200" stroke-linecap="butt"/><path d="M1897.78 792.82L1895.52 795.08" stroke-width="2.200" stroke-linecap="butt"/><path d="M1896.20 789.00L1893.00 789.00" stroke-width="2.200" stroke-linecap="butt"/><path d="M1897.78 785.18L1895.52 782.92" stroke-width="2.200" stroke-linecap="butt"/><path d="M1901.60 783.60L1901.60 780.40" stroke-width="2.200" stroke-linecap="butt"/><path d="M1905.42 785.18L1907.68 782.92" stroke-width="2.200" stroke-linecap="butt"/></svg>
<span class="t" style="left:1784.0px;top:751.8px;font-size:12px;color:#b1b1b3;">6</span>
<span class="t" style="left:62.5px;top:782.8px;font-size:12px;color:#b1b1b3;letter-spacing:0.082px;">cpb2cs.toyota-europe.com/api/user/</span>
<div class="b" style="left:1243px;top:780px;width:28px;height:18px;border-radius:3px;background:#38393b"></div>
<span class="t" style="left:1250.0px;top:782.8px;font-size:12px;color:#fff;letter-spacing:0.328px;">All</span>
<span class="t" style="left:1279.5px;top:782.8px;font-size:12px;color:#b1b1b3;letter-spacing:-0.157px;">HTML</span>
<span class="t" style="left:1328.0px;top:782.8px;font-size:12px;color:#b1b1b3;letter-spacing:-1.844px;">CSS</span>
<span class="t" style="left:1365.3px;top:782.8px;font-size:12px;color:#b1b1b3;letter-spacing:-2.316px;">JS</span>
<span class="t" style="left:1392.8px;top:782.8px;font-size:12px;color:#b1b1b3;letter-spacing:-0.972px;">XHR</span>
<span class="t" style="left:1432.5px;top:782.8px;font-size:12px;color:#b1b1b3;letter-spacing:-0.004px;">Fonts</span>
<span class="t" style="left:1478.3px;top:782.8px;font-size:12px;color:#b1b1b3;letter-spacing:-0.192px;">Images</span>
<span class="t" style="left:1532.5px;top:782.8px;font-size:12px;color:#b1b1b3;letter-spacing:-0.122px;">Media</span>
<span class="t" style="left:1580.8px;top:782.8px;font-size:12px;color:#b1b1b3;letter-spacing:-0.144px;">WS</span>
<span class="t" style="left:1615.3px;top:782.8px;font-size:12px;color:#b1b1b3;letter-spacing:0.221px;">Other</span>
<span class="t" style="left:1690.0px;top:782.8px;font-size:12px;color:#b1b1b3;letter-spacing:-0.304px;">Disable Cache</span>
<span class="t" style="left:1789.3px;top:782.8px;font-size:12px;color:#b1b1b3;letter-spacing:0.218px;">No Throttling</span>
<div class="b" style="left:0;top:805px;width:1308px;height:27px;background:#1d1e1f"></div>
<div class="b" style="left:0;top:832px;width:1308px;height:1px;background:#2a2c2c"></div>
<span class="t" style="left:5.6px;top:814.3px;font-size:12px;color:#b1b1b3;letter-spacing:-0.046px;">Status</span>
<span class="t" style="left:94.6px;top:814.3px;font-size:12px;color:#b1b1b3;letter-spacing:-0.046px;">Method</span>
<span class="t" style="left:181.5px;top:814.3px;font-size:12px;color:#b1b1b3;letter-spacing:-0.072px;">Domain</span>
<span class="t" style="left:355.8px;top:814.3px;font-size:12px;color:#b1b1b3;letter-spacing:-0.381px;">File</span>
<span class="t" style="left:791.3px;top:814.3px;font-size:12px;color:#b1b1b3;letter-spacing:0.380px;">Initiator</span>
<span class="t" style="left:966.3px;top:814.3px;font-size:12px;color:#b1b1b3;letter-spacing:-0.205px;">Type</span>
<span class="t" style="left:1053.3px;top:814.3px;font-size:12px;color:#b1b1b3;letter-spacing:0.062px;">Transferred</span>
<span class="t" style="left:1228.0px;top:814.3px;font-size:12px;color:#b1b1b3;letter-spacing:-0.781px;">Size</span>
<div class="b" style="left:0;top:833px;width:1308px;height:247px;overflow:hidden"><div class="b" style="left:0;top:-833px;width:1308px;height:1080px">
<div class="b" style="left:0;top:815.87px;width:1308px;height:26.2px;background:#212324"></div>
<div class="b" style="left:4.8px;top:820.73px;width:26.2px;height:15.3px;border-radius:3.5px;background:#8ce078"></div>
<span class="t" style="left:8.2px;top:823.3px;font-size:12px;color:#0b250b;font-family:'DejaVu Sans Mono', 'Liberation Mono', monospace;letter-spacing:-0.544px;">200</span>
<span class="t" style="left:93.5px;top:823.1px;font-size:12px;color:#b1b1b3;letter-spacing:-0.786px;">GET</span>
<svg class="b" style="left:179.2px;top:821.73px" width="13.6" height="14.2" viewBox="0 0 13 14"><path d="M3.6 6V4.2a2.9 2.9 0 0 1 5.8 0V6" fill="none" stroke="#9a9a9c" stroke-width="1.6"/><rect x="1" y="5.6" width="11" height="7.6" rx="1.6" fill="#9a9a9c"/></svg>
<span class="t" style="left:197.0px;top:823.1px;font-size:12px;color:#b1b1b3;letter-spacing:0.082px;">cpb2cs.toyota-europe.com</span>
<span class="t" style="left:355.0px;top:823.1px;font-size:12px;color:#b1b1b3;">1</span>
<span class="t" style="left:791.3px;top:823.1px;font-size:12px;color:#4a9bea;letter-spacing:0.138px;">ruxitagentjs_</span>
<span class="t" style="left:943.6px;top:824.8px;font-size:10px;color:#b1b1b3;">…</span>
<span class="t" style="left:966.0px;top:823.1px;font-size:12px;color:#b1b1b3;letter-spacing:0.15px;">json</span>
<span class="t" style="left:1053.0px;top:823.1px;font-size:12px;color:#b1b1b3;">1.20 KB</span>
<span class="t" style="left:1228.0px;top:823.1px;font-size:12px;color:#b1b1b3;">638 B</span>
<div class="b" style="left:0;top:842.00px;width:1308px;height:26.2px;background:#1d1f1e"></div>
<div class="b" style="left:4.8px;top:846.86px;width:26.2px;height:15.3px;border-radius:3.5px;background:#8ce078"></div>
<span class="t" style="left:8.2px;top:849.4px;font-size:12px;color:#0b250b;font-family:'DejaVu Sans Mono', 'Liberation Mono', monospace;letter-spacing:-0.544px;">204</span>
<span class="t" style="left:93.5px;top:849.2px;font-size:12px;color:#b1b1b3;letter-spacing:-0.186px;">OPTIONS</span>
<svg class="b" style="left:179.2px;top:847.86px" width="13.6" height="14.2" viewBox="0 0 13 14"><path d="M3.6 6V4.2a2.9 2.9 0 0 1 5.8 0V6" fill="none" stroke="#9a9a9c" stroke-width="1.6"/><rect x="1" y="5.6" width="11" height="7.6" rx="1.6" fill="#9a9a9c"/></svg>
<span class="t" style="left:197.0px;top:849.2px;font-size:12px;color:#b1b1b3;letter-spacing:0.082px;">cpb2cs.toyota-europe.com</span>
<span class="t" style="left:355.0px;top:849.2px;font-size:12px;color:#b1b1b3;">1</span>
<span class="t" style="left:791.3px;top:849.2px;font-size:12px;color:#b1b1b3;letter-spacing:0.15px;">xhr</span>
<span class="t" style="left:966.0px;top:849.2px;font-size:12px;color:#b1b1b3;letter-spacing:0.15px;">plain</span>
<span class="t" style="left:1053.0px;top:849.2px;font-size:12px;color:#b1b1b3;">482 B</span>
<span class="t" style="left:1228.0px;top:849.2px;font-size:12px;color:#b1b1b3;">0 B</span>
<div class="b" style="left:0;top:868.13px;width:1308px;height:26.2px;background:#212324"></div>
<div class="b" style="left:4.8px;top:872.99px;width:26.2px;height:15.3px;border-radius:3.5px;background:#8ce078"></div>
<span class="t" style="left:8.2px;top:875.5px;font-size:12px;color:#0b250b;font-family:'DejaVu Sans Mono', 'Liberation Mono', monospace;letter-spacing:-0.544px;">200</span>
<span class="t" style="left:93.5px;top:875.3px;font-size:12px;color:#b1b1b3;letter-spacing:-0.786px;">GET</span>
<svg class="b" style="left:179.2px;top:873.99px" width="13.6" height="14.2" viewBox="0 0 13 14"><path d="M3.6 6V4.2a2.9 2.9 0 0 1 5.8 0V6" fill="none" stroke="#9a9a9c" stroke-width="1.6"/><rect x="1" y="5.6" width="11" height="7.6" rx="1.6" fill="#9a9a9c"/></svg>
<span class="t" style="left:197.0px;top:875.3px;font-size:12px;color:#b1b1b3;letter-spacing:0.082px;">cpb2cs.toyota-europe.com</span>
<span class="t" style="left:355.0px;top:875.3px;font-size:12px;color:#b1b1b3;">1</span>
<svg class="b" style="left:768px;top:876.59px" width="14" height="10" viewBox="0 0 14 10"><path d="M4.2 6.6C4.2 3.5 6 1.2 8.6 1.2s4.4 2.3 4.4 5.4z M1 5.2a1.7 1.7 0 0 1 3.4 0c0 1-.7 1.6-1.7 1.6S1 6.200 1 5.200z M5.200 6.400h2.200v2.800H5.200z M10 6.400h2.200v2.800H10z M0 7.200l1.800-.8v1z" fill="#a9a9ab"/></svg>
<span class="t" style="left:791.3px;top:875.3px;font-size:12px;color:#4a9bea;letter-spacing:0.138px;">ruxitagentjs_</span>
<span class="t" style="left:943.6px;top:877.0px;font-size:10px;color:#b1b1b3;">…</span>
<span class="t" style="left:966.0px;top:875.3px;font-size:12px;color:#b1b1b3;letter-spacing:0.15px;">json</span>
<span class="t" style="left:1053.0px;top:875.3px;font-size:12px;color:#b1b1b3;">1.20 KB</span>
<span class="t" style="left:1228.0px;top:875.3px;font-size:12px;color:#b1b1b3;">638 B</span>
<div class="b" style="left:0;top:894.26px;width:1308px;height:26.2px;background:#1d1f1e"></div>
<div class="b" style="left:4.8px;top:898.42px;width:26.2px;height:15.3px;border-radius:3.5px;background:#8ce078"></div>
<span class="t" style="left:8.2px;top:901.0px;font-size:12px;color:#0b250b;font-family:'DejaVu Sans Mono', 'Liberation Mono', monospace;letter-spacing:-0.544px;">204</span>
<span class="t" style="left:93.5px;top:900.8px;font-size:12px;color:#b1b1b3;letter-spacing:-0.186px;">OPTIONS</span>
<svg class="b" style="left:179.2px;top:899.42px" width="13.6" height="14.2" viewBox="0 0 13 14"><path d="M3.6 6V4.2a2.9 2.9 0 0 1 5.8 0V6" fill="none" stroke="#9a9a9c" stroke-width="1.6"/><rect x="1" y="5.6" width="11" height="7.6" rx="1.6" fill="#9a9a9c"/></svg>
<span class="t" style="left:197.0px;top:900.8px;font-size:12px;color:#b1b1b3;letter-spacing:0.082px;">cpb2cs.toyota-europe.com</span>
<span class="t" style="left:791.3px;top:900.8px;font-size:12px;color:#b1b1b3;letter-spacing:0.15px;">xhr</span>
<span class="t" style="left:966.0px;top:900.8px;font-size:12px;color:#b1b1b3;letter-spacing:0.15px;">plain</span>
<span class="t" style="left:1053.0px;top:900.8px;font-size:12px;color:#b1b1b3;">461 B</span>
<span class="t" style="left:1228.0px;top:900.8px;font-size:12px;color:#b1b1b3;">0 B</span>
<div class="b" style="left:0;top:920.39px;width:1308px;height:26.2px;background:#212324"></div>
<div class="b" style="left:4.8px;top:924.55px;width:26.2px;height:15.3px;border-radius:3.5px;background:#8ce078"></div>
<span class="t" style="left:8.2px;top:927.1px;font-size:12px;color:#0b250b;font-family:'DejaVu Sans Mono', 'Liberation Mono', monospace;letter-spacing:-0.544px;">200</span>
<span class="t" style="left:93.5px;top:926.9px;font-size:12px;color:#b1b1b3;letter-spacing:-0.786px;">GET</span>
<svg class="b" style="left:179.2px;top:925.55px" width="13.6" height="14.2" viewBox="0 0 13 14"><path d="M3.6 6V4.2a2.9 2.9 0 0 1 5.8 0V6" fill="none" stroke="#9a9a9c" stroke-width="1.6"/><rect x="1" y="5.6" width="11" height="7.6" rx="1.6" fill="#9a9a9c"/></svg>
<span class="t" style="left:197.0px;top:926.9px;font-size:12px;color:#b1b1b3;letter-spacing:0.082px;">cpb2cs.toyota-europe.com</span>
<span class="t" style="left:791.3px;top:926.9px;font-size:12px;color:#4a9bea;letter-spacing:0.138px;">ruxitagentjs_</span>
<span class="t" style="left:943.6px;top:928.6px;font-size:10px;color:#b1b1b3;">…</span>
<span class="t" style="left:966.0px;top:926.9px;font-size:12px;color:#b1b1b3;letter-spacing:0.15px;">json</span>
<span class="t" style="left:1053.0px;top:926.9px;font-size:12px;color:#b1b1b3;">8.57 KB</span>
<span class="t" style="left:1228.0px;top:926.9px;font-size:12px;color:#b1b1b3;">7.99 KB</span>
<div class="b" style="left:0;top:946.52px;width:1308px;height:26.2px;background:#1d1f1e"></div>
<div class="b" style="left:4.8px;top:951.38px;width:26.2px;height:15.3px;border-radius:3.5px;background:#8ce078"></div>
<span class="t" style="left:8.2px;top:953.9px;font-size:12px;color:#0b250b;font-family:'DejaVu Sans Mono', 'Liberation Mono', monospace;letter-spacing:-0.544px;">204</span>
<span class="t" style="left:93.5px;top:953.7px;font-size:12px;color:#b1b1b3;letter-spacing:-0.186px;">OPTIONS</span>
<svg class="b" style="left:179.2px;top:952.38px" width="13.6" height="14.2" viewBox="0 0 13 14"><path d="M3.6 6V4.2a2.9 2.9 0 0 1 5.8 0V6" fill="none" stroke="#9a9a9c" stroke-width="1.6"/><rect x="1" y="5.6" width="11" height="7.6" rx="1.6" fill="#9a9a9c"/></svg>
<span class="t" style="left:197.0px;top:953.7px;font-size:12px;color:#b1b1b3;letter-spacing:0.082px;">cpb2cs.toyota-europe.com</span>
<span class="t" style="left:355.0px;top:953.7px;font-size:12px;color:#b1b1b3;">3</span>
<span class="t" style="left:791.3px;top:953.7px;font-size:12px;color:#b1b1b3;letter-spacing:0.15px;">xhr</span>
<span class="t" style="left:966.0px;top:953.7px;font-size:12px;color:#b1b1b3;letter-spacing:0.15px;">plain</span>
<span class="t" style="left:1053.0px;top:953.7px;font-size:12px;color:#b1b1b3;">481 B</span>
<span class="t" style="left:1228.0px;top:953.7px;font-size:12px;color:#b1b1b3;">0 B</span>
<div class="b" style="left:0;top:972.65px;width:1308px;height:26.2px;background:#212324"></div>
<div class="b" style="left:4.8px;top:977.51px;width:26.2px;height:15.3px;border-radius:3.5px;background:#8ce078"></div>
<span class="t" style="left:8.2px;top:980.1px;font-size:12px;color:#0b250b;font-family:'DejaVu Sans Mono', 'Liberation Mono', monospace;letter-spacing:-0.544px;">200</span>
<span class="t" style="left:93.5px;top:979.9px;font-size:12px;color:#b1b1b3;letter-spacing:-0.786px;">GET</span>
<svg class="b" style="left:179.2px;top:978.51px" width="13.6" height="14.2" viewBox="0 0 13 14"><path d="M3.6 6V4.2a2.9 2.9 0 0 1 5.8 0V6" fill="none" stroke="#9a9a9c" stroke-width="1.6"/><rect x="1" y="5.6" width="11" height="7.6" rx="1.6" fill="#9a9a9c"/></svg>
<span class="t" style="left:197.0px;top:979.9px;font-size:12px;color:#b1b1b3;letter-spacing:0.082px;">cpb2cs.toyota-europe.com</span>
<span class="t" style="left:355.0px;top:979.9px;font-size:12px;color:#b1b1b3;">3</span>
<svg class="b" style="left:768px;top:981.11px" width="14" height="10" viewBox="0 0 14 10"><path d="M4.2 6.6C4.2 3.5 6 1.2 8.6 1.2s4.4 2.3 4.4 5.4z M1 5.2a1.7 1.7 0 0 1 3.4 0c0 1-.7 1.6-1.7 1.6S1 6.200 1 5.200z M5.200 6.400h2.200v2.800H5.200z M10 6.400h2.200v2.800H10z M0 7.200l1.800-.8v1z" fill="#a9a9ab"/></svg>
<span class="t" style="left:791.3px;top:979.9px;font-size:12px;color:#4a9bea;letter-spacing:0.138px;">ruxitagentjs_</span>
<span class="t" style="left:943.6px;top:981.5px;font-size:10px;color:#b1b1b3;">…</span>
<span class="t" style="left:966.0px;top:979.9px;font-size:12px;color:#b1b1b3;letter-spacing:0.15px;">json</span>
<span class="t" style="left:1053.0px;top:979.9px;font-size:12px;color:#b1b1b3;">50.05 KB</span>
<span class="t" style="left:1228.0px;top:979.9px;font-size:12px;color:#b1b1b3;">49.47 KB</span>
<div class="b" style="left:0;top:998.78px;width:1308px;height:26.2px;background:#1d1f1e"></div>
<div class="b" style="left:4.8px;top:1003.64px;width:26.2px;height:15.3px;border-radius:3.5px;background:#8ce078"></div>
<span class="t" style="left:8.2px;top:1006.2px;font-size:12px;color:#0b250b;font-family:'DejaVu Sans Mono', 'Liberation Mono', monospace;letter-spacing:-0.544px;">204</span>
<span class="t" style="left:93.5px;top:1006.0px;font-size:12px;color:#b1b1b3;letter-spacing:-0.186px;">OPTIONS</span>
<svg class="b" style="left:179.2px;top:1004.64px" width="13.6" height="14.2" viewBox="0 0 13 14"><path d="M3.6 6V4.2a2.9 2.9 0 0 1 5.8 0V6" fill="none" stroke="#9a9a9c" stroke-width="1.6"/><rect x="1" y="5.6" width="11" height="7.6" rx="1.6" fill="#9a9a9c"/></svg>
<span class="t" style="left:197.0px;top:1006.0px;font-size:12px;color:#b1b1b3;letter-spacing:0.082px;">cpb2cs.toyota-europe.com</span>
<span class="t" style="left:791.3px;top:1006.0px;font-size:12px;color:#b1b1b3;letter-spacing:0.15px;">xhr</span>
<span class="t" style="left:966.0px;top:1006.0px;font-size:12px;color:#b1b1b3;letter-spacing:0.15px;">plain</span>
<span class="t" style="left:1053.0px;top:1006.0px;font-size:12px;color:#b1b1b3;">461 B</span>
<span class="t" style="left:1228.0px;top:1006.0px;font-size:12px;color:#b1b1b3;">0 B</span>
<div class="b" style="left:0;top:1024.91px;width:1308px;height:26.2px;background:#1f3558"></div>
<div class="b" style="left:4.8px;top:1029.77px;width:26.2px;height:15.3px;border-radius:3.5px;background:#8ce078"></div>
<span class="t" style="left:8.2px;top:1032.3px;font-size:12px;color:#0b250b;font-family:'DejaVu Sans Mono', 'Liberation Mono', monospace;letter-spacing:-0.544px;">200</span>
<span class="t" style="left:93.5px;top:1032.1px;font-size:12px;color:#ffffff;letter-spacing:-0.786px;">GET</span>
<svg class="b" style="left:179.2px;top:1030.77px" width="13.6" height="14.2" viewBox="0 0 13 14"><path d="M3.6 6V4.2a2.9 2.9 0 0 1 5.8 0V6" fill="none" stroke="#dfe3ee" stroke-width="1.6"/><rect x="1" y="5.6" width="11" height="7.6" rx="1.6" fill="#dfe3ee"/></svg>
<span class="t" style="left:197.0px;top:1032.1px;font-size:12px;color:#ffffff;letter-spacing:0.082px;">cpb2cs.toyota-europe.com</span>
<svg class="b" style="left:768px;top:1033.37px" width="14" height="10" viewBox="0 0 14 10"><path d="M4.2 6.6C4.2 3.5 6 1.2 8.6 1.2s4.4 2.3 4.4 5.4z M1 5.2a1.7 1.7 0 0 1 3.4 0c0 1-.7 1.6-1.7 1.6S1 6.200 1 5.200z M5.200 6.400h2.200v2.800H5.200z M10 6.400h2.200v2.800H10z M0 7.200l1.800-.8v1z" fill="#ffffff"/></svg>
<span class="t" style="left:791.3px;top:1032.1px;font-size:12px;color:#ffffff;letter-spacing:0.138px;">ruxitagentjs_</span>
<span class="t" style="left:943.6px;top:1033.8px;font-size:10px;color:#ffffff;">…</span>
<span class="t" style="left:966.0px;top:1032.1px;font-size:12px;color:#ffffff;letter-spacing:0.15px;">json</span>
<span class="t" style="left:1053.0px;top:1032.1px;font-size:12px;color:#ffffff;">64.80 KB</span>
<span class="t" style="left:1228.0px;top:1032.1px;font-size:12px;color:#ffffff;">64.22 KB</span>
</div></div>
<div class="b" style="left:87.0px;top:805px;width:1px;height:220px;background:#262828"></div>
<div class="b" style="left:174.0px;top:805px;width:1px;height:220px;background:#262828"></div>
<div class="b" style="left:349.0px;top:805px;width:1px;height:220px;background:#262828"></div>
<div class="b" style="left:785.0px;top:805px;width:1px;height:220px;background:#262828"></div>
<div class="b" style="left:959.0px;top:805px;width:1px;height:220px;background:#262828"></div>
<div class="b" style="left:1045.5px;top:805px;width:1px;height:220px;background:#262828"></div>
<div class="b" style="left:1221.0px;top:805px;width:1px;height:220px;background:#262828"></div>
<div class="b" style="left:1308px;top:805px;width:12px;height:275px;background:#252628"></div>
<div class="b" style="left:1311.2px;top:888px;width:5.7px;height:160.4px;border-radius:3px;background:#6a6a6c"></div>
<div class="b" style="left:1320px;top:832px;width:600px;height:1px;background:#27292a"></div>
<div class="b" style="left:1320px;top:859.5px;width:600px;height:1px;background:#27292a"></div>
<div class="b" style="left:1320px;top:885.5px;width:600px;height:1px;background:#262828"></div>
<svg class="b" style="left:1327px;top:811px" width="18" height="16" viewBox="0 0 18 16" fill="none" stroke="#c4c4c6"><rect x="1.200" y="1.400" width="14.600" height="12.400" rx="1.600" fill="#0c0c0d" stroke-width="1.300"/><path d="M12.600 1.400v12.400" stroke-width="1.200"/><path d="M4.800 4.600l5 3-5 3z" stroke-width="1.100"/></svg>
<span class="t" style="left:1363.3px;top:811.8px;font-size:13px;color:#b1b1b3;letter-spacing:-0.323px;">Headers</span>
<span class="t" style="left:1435.5px;top:811.8px;font-size:13px;color:#b1b1b3;letter-spacing:-0.328px;">Cookies</span>
<span class="t" style="left:1505.5px;top:811.8px;font-size:13px;color:#b1b1b3;letter-spacing:-0.287px;">Request</span>
<span class="t" style="left:1577.5px;top:811.8px;font-size:13px;color:#ffffff;letter-spacing:-0.507px;">Response</span>
<span class="t" style="left:1657.6px;top:811.8px;font-size:13px;color:#b1b1b3;letter-spacing:0.128px;">Timings</span>
<span class="t" style="left:1728.6px;top:811.8px;font-size:13px;color:#b1b1b3;letter-spacing:-0.284px;">Stack Trace</span>
<span class="t" style="left:1819.0px;top:811.8px;font-size:13px;color:#b1b1b3;letter-spacing:-0.038px;">Security</span>
<div class="b" style="left:1565.5px;top:805px;width:79.5px;height:2px;background:#0a84ff"></div>
<svg class="b" style="left:1329px;top:839px" width="13" height="14" viewBox="0 0 13 14"><path d="M1.400 1.800h9.600l-3.700 5v5.600l-2.200-1.800V6.800z" stroke="#77777a" stroke-width="1.100" fill="#3a3a3c"/></svg>
<span class="t" style="left:1345.6px;top:839.8px;font-size:12px;color:#68686b;letter-spacing:0.127px;">Filter properties</span>
<span class="t" style="left:1324.8px;top:866.8px;font-size:12px;color:#b8b8ba;letter-spacing:-0.705px;">JSON</span>
<span class="t" style="left:1857.0px;top:866.8px;font-size:12px;color:#b1b1b3;letter-spacing:-0.708px;">Raw</span>
<div class="b" style="left:1885px;top:865.5px;width:26px;height:13px;border-radius:7px;background:#2f3032"></div><div class="b" style="left:1887px;top:867.5px;width:9px;height:9px;border-radius:5px;background:#a9a9ab"></div>
<div class="b" style="left:1320px;top:930.8px;width:588px;height:21.6px;background:#1f3558"></div>
<div class="b" style="left:1320px;top:996.2px;width:588px;height:21.6px;background:#25272b"></div>
<svg class="b" style="left:1328px;top:887px" width="12" height="66" viewBox="0 0 12 66"><path d="M2.600 6.400l4.800 4.400-4.800 4.400z M2.600 28.200l4.800 4.400-4.800 4.400z" fill="#8a8a8c"/><path d="M0.800 51.800h8.800l-4.400 5.600z" fill="#fff"/></svg>
<span class="t" style="left:1342.0px;top:892.2px;font-size:12px;color:#6fb1e8;letter-spacing:0.070px;">tripEvents:</span>
<span class="t" style="left:1405.0px;top:892.2px;font-size:12px;color:#6fb1e8;letter-spacing:-0.688px;">[ {…}, {…}, {…}, {…}, {…}, {…}, {…}, {…}, {…}, {…}, … ]</span>
<span class="t" style="left:1342.0px;top:914.0px;font-size:12px;color:#6fb1e8;letter-spacing:0.042px;">tripEventsType:</span>
<span class="t" style="left:1431.0px;top:914.0px;font-size:12px;color:#6fb1e8;letter-spacing:-0.619px;">[ {…}, {…}, {…}, {…}, {…} ]</span>
<span class="t" style="left:1342.0px;top:935.8px;font-size:12px;color:#fff;letter-spacing:0.066px;">statistics:</span>
<span class="t" style="left:1397.5px;top:935.8px;font-size:12px;color:#fff;letter-spacing:-0.014px;">Object { totalDurationInSec: 4525, idleDurationInSec: 93, highwayDurationInSec: 3960, … }</span>
<span class="t" style="left:1359.1px;top:957.6px;font-size:12px;color:#6fb1e8;letter-spacing:0.108px;">totalDurationInSec:</span>
<span class="t" style="left:1468.6px;top:957.6px;font-size:12px;color:#86cf70;letter-spacing:0.032px;">4525</span>
<span class="t" style="left:1359.1px;top:980.0px;font-size:12px;color:#6fb1e8;letter-spacing:0.026px;">idleDurationInSec:</span>
<span class="t" style="left:1463.1px;top:980.0px;font-size:12px;color:#86cf70;letter-spacing:0.141px;">93</span>
<span class="t" style="left:1359.1px;top:1001.2px;font-size:12px;color:#6fb1e8;letter-spacing:0.045px;">highwayDurationInSec:</span>
<span class="t" style="left:1488.2px;top:1001.2px;font-size:12px;color:#86cf70;letter-spacing:0.466px;">3960</span>
<span class="t" style="left:1359.1px;top:1023.0px;font-size:12px;color:#6fb1e8;letter-spacing:-0.065px;">overspeedDurationInSec:</span>
<span class="t" style="left:1498.6px;top:1023.0px;font-size:12px;color:#86cf70;letter-spacing:-0.759px;">10</span>
<span class="t" style="left:1359.1px;top:1044.8px;font-size:12px;color:#6fb1e8;letter-spacing:0.107px;">fuelConsumptionInL:</span>
<span class="t" style="left:1476.0px;top:1044.8px;font-size:12px;color:#86cf70;letter-spacing:-0.408px;">6.161</span>
<span class="t" style="left:1359.1px;top:1066.6px;font-size:12px;color:#6fb1e8;letter-spacing:-0.033px;">averageFuelConsumptionInL:</span>
<span class="t" style="left:1521.2px;top:1066.6px;font-size:12px;color:#86cf70;letter-spacing:0.317px;">6.348</span>
<div class="b" style="left:1911px;top:888.8px;width:6px;height:69px;border-radius:3px;background:#5c5c5e"></div>
<svg class="b" style="left:0;top:0" width="1920" height="1080" viewBox="0 0 1920 1080" fill="none" stroke="#d01b1e" stroke-width="3.200"><path d="M353.900 645V732" stroke-dasharray="8.500 3.200"/><path d="M335.600 698.900H373.900L353.900 730Z" stroke-dasharray="8.500 3.200" stroke-width="3"/><rect x="315.600" y="739.200" width="100.800" height="30" stroke-dasharray="8.500 3.500" stroke-width="3.400"/><path d="M130.400 668.500L129.400 762" stroke-width="3"/><path d="M126.800 752l2.600 11 2.800-11z" fill="#d01b1e" stroke-width="1"/><path d="M112.300 734.400H148.300L129.300 763Z" stroke-dasharray="8 3.200" stroke-width="2.800"/><rect x="47.500" y="777.500" width="221" height="22" stroke-dasharray="8.500 3.500" stroke-width="3"/><path d="M390.600 954V1019" stroke-dasharray="8 3" stroke-width="3.200"/><path d="M377.600 1003H403.600L390.600 1018.500Z" stroke-dasharray="7 3" stroke-width="2.800"/><path d="M1034.400 981.300L1000.400 1023.800" stroke-dasharray="8 3" stroke-width="3.100"/><path d="M1000.600 1023.600L999.400 1003L1022 1017.400Z" stroke-dasharray="7 3" stroke-width="2.800"/><rect x="962.700" y="1028.700" width="29.900" height="18.600" stroke-dasharray="8 3" stroke-width="3.100"/><path d="M1602.300 702.500V795" stroke-dasharray="8.500 3.200" stroke-width="3"/><path d="M1580.800 764.700H1622.500L1602.500 795Z" stroke-dasharray="8.500 3.200" stroke-width="2.800"/><rect x="1565.500" y="803.800" width="80.800" height="26" stroke-dasharray="8.500 3.500" stroke-width="3"/><rect x="1326.800" y="888.500" width="572.500" height="189.500" stroke-dasharray="12 4" stroke-width="3.600"/></svg>
<span class="t" style="left:334.5px;top:657.1px;font-size:19.5px;color:#d01b1e;">1</span>
<span class="t" style="left:111.5px;top:685.1px;font-size:19.5px;color:#d01b1e;">2</span>
<span class="t" style="left:371.6px;top:966.1px;font-size:19px;color:#d01b1e;">3</span>
<span class="t" style="left:1005.3px;top:979.9px;font-size:19px;color:#d01b1e;">4</span>
<span class="t" style="left:1581.2px;top:713.1px;font-size:19.5px;color:#d01b1e;">5</span>
<span class="t" style="left:373.0px;top:1027.9px;font-size:20px;color:#d01b1e;letter-spacing:-0.372px;">VIN</span>
</div></body></html>
